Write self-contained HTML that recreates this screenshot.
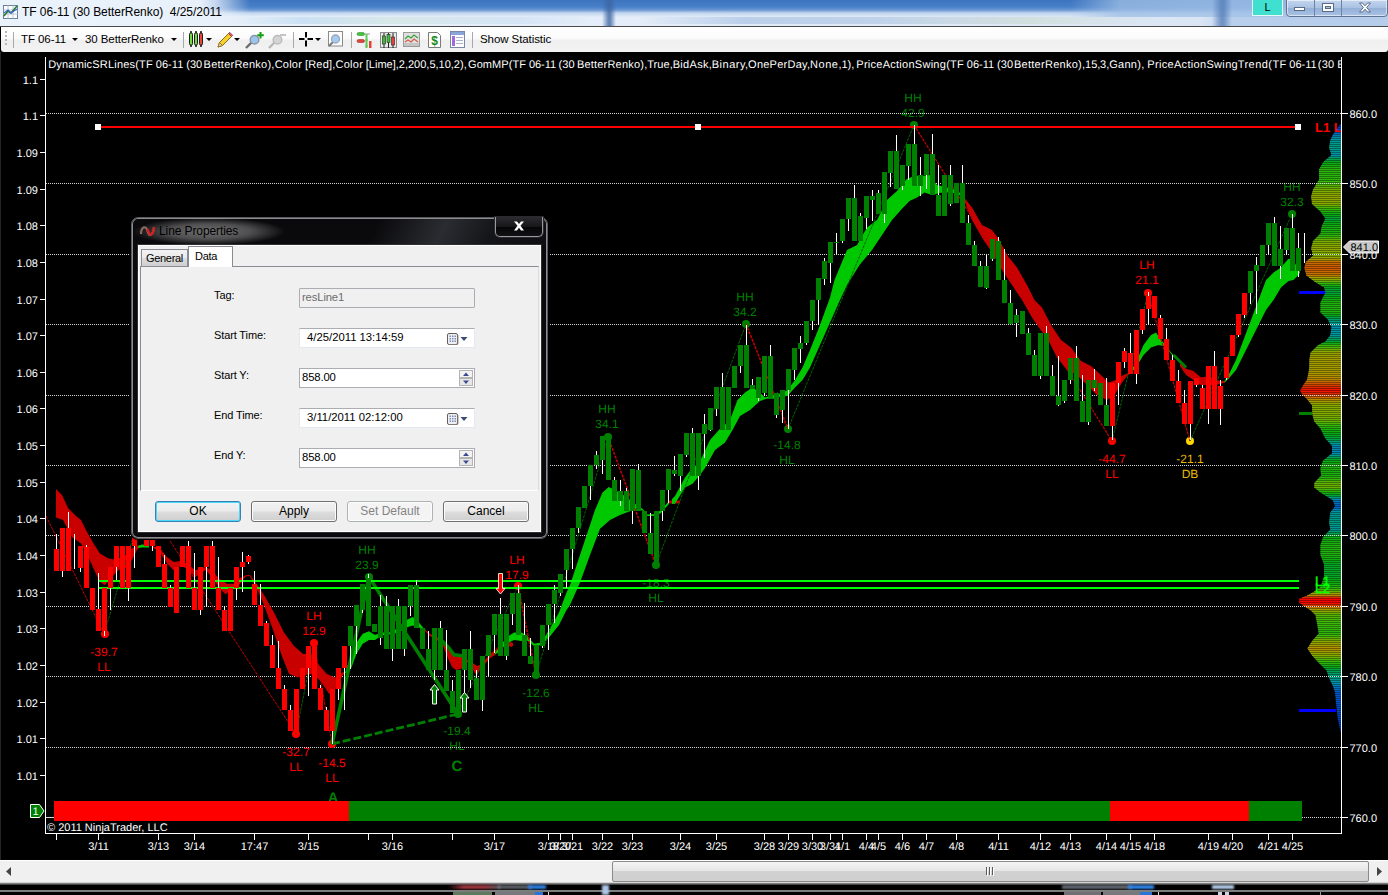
<!DOCTYPE html>
<html lang="en">
<head>
<meta charset="utf-8">
<title>TF 06-11 (30 BetterRenko) 4/25/2011</title>
<style>
html,body{margin:0;padding:0;background:#000;}
body{width:1388px;height:895px;position:relative;overflow:hidden;font-family:"Liberation Sans",Arial,sans-serif;font-size:12px;color:#000;}
.abs{position:absolute;}
#chart{position:absolute;left:0;top:0;}
/* ---------- title bar ---------- */
#title{left:0;top:0;width:1388px;height:26px;background:#dfeaf7;overflow:hidden;}
#title .blur{position:absolute;}
#title .txt{position:absolute;left:22px;top:5px;font-size:12px;line-height:15px;white-space:pre;color:#000;letter-spacing:-0.05px;}
/* ---------- toolbar ---------- */
#tb{left:1px;top:27px;width:1387px;height:25px;background:linear-gradient(#ffffff 0,#fbfbfb 45%,#efefef 55%,#f3f3f3 100%);border-radius:0 0 3px 3px;}
#tbline{left:0;top:26px;width:1388px;height:1px;background:#4a4a4a;}
#tb .t{position:absolute;top:5px;font-size:11.5px;line-height:14px;white-space:pre;letter-spacing:-0.08px;}
#tb .sep{position:absolute;top:5px;width:1px;height:16px;background:#a8a8a8;}
#tb .dd{position:absolute;top:11px;width:0;height:0;border-left:3px solid transparent;border-right:3px solid transparent;border-top:3px solid #000;}
/* ---------- scrollbar ---------- */
#sb{left:0;top:860px;width:1388px;height:23px;background:linear-gradient(#f0f0f0 0,#f0f0f0 21px,#b4b4b4 100%);border-top:1px solid #fff;box-sizing:border-box;}
#thumb{left:612px;top:861px;width:757px;height:21px;box-sizing:border-box;border:1px solid #8a8a8a;border-radius:2px;background:linear-gradient(#f4f4f4 0,#e6e6e6 45%,#d2d2d2 50%,#cfcfcf 100%);}
#bottom{left:0;top:883px;width:1388px;height:12px;background:#000;}
/* ---------- dialog ---------- */
#dlg{left:131px;top:217px;width:417px;height:322px;box-sizing:border-box;border-radius:7px;background:#0a0a0c;border:1px solid #5a5a5e;box-shadow:0 0 0 1px #000, inset 0 0 0 1px #8c8c90;}
#dlg .client{position:absolute;left:6px;top:27px;width:403px;height:287px;background:#f0f0f0;border:1px solid #fff;box-sizing:border-box;outline:1px solid #303033;}
#dlg .lbl{position:absolute;left:75px;font-size:11px;line-height:13px;white-space:pre;letter-spacing:-0.12px;}
#dlg .box{position:absolute;left:160px;width:176px;height:20px;letter-spacing:-0.15px;box-sizing:border-box;border:1px solid #abadb3;background:#fff;font-size:11.3px;line-height:17px;white-space:pre;padding-left:2px;}
#dlg .btn{position:absolute;top:255px;width:86px;height:21px;box-sizing:border-box;border:1px solid #707070;border-radius:3px;background:linear-gradient(#f2f2f2 0,#ebebeb 48%,#dddddd 52%,#cfcfcf 100%);box-shadow:inset 0 0 0 1px #fcfcfc;font-size:12px;line-height:18px;text-align:center;}
</style>
</head>
<body>
<svg id="chart" width="1388" height="895" viewBox="0 0 1388 895" shape-rendering="crispEdges" text-rendering="geometricPrecision">
<defs><clipPath id="plot"><rect x="46" y="54" width="1295" height="779"/></clipPath></defs>
<rect x="0" y="52" width="1388" height="808" fill="#000"/>
<rect x="0" y="52" width="1" height="808" fill="#26222c"/>
<rect x="1340.0" y="124" width="1.0" height="1" fill="rgb(0,30,128)" shape-rendering="geometricPrecision"/>
<rect x="1339.2" y="125" width="1.8" height="1" fill="rgb(0,54,200)" shape-rendering="geometricPrecision"/>
<rect x="1338.5" y="126" width="2.5" height="1" fill="rgb(0,38,128)" shape-rendering="geometricPrecision"/>
<rect x="1337.8" y="127" width="3.2" height="1" fill="rgb(0,67,200)" shape-rendering="geometricPrecision"/>
<rect x="1337.0" y="128" width="4.0" height="1" fill="rgb(0,46,128)" shape-rendering="geometricPrecision"/>
<rect x="1336.3" y="129" width="4.7" height="1" fill="rgb(0,78,200)" shape-rendering="geometricPrecision"/>
<rect x="1335.7" y="130" width="5.3" height="1" fill="rgb(0,53,128)" shape-rendering="geometricPrecision"/>
<rect x="1335.0" y="131" width="6.0" height="1" fill="rgb(0,90,200)" shape-rendering="geometricPrecision"/>
<rect x="1334.3" y="132" width="6.7" height="1" fill="rgb(0,63,124)" shape-rendering="geometricPrecision"/>
<rect x="1333.7" y="133" width="7.3" height="1" fill="rgb(0,110,190)" shape-rendering="geometricPrecision"/>
<rect x="1333.0" y="134" width="8.0" height="1" fill="rgb(0,76,118)" shape-rendering="geometricPrecision"/>
<rect x="1332.5" y="135" width="8.5" height="1" fill="rgb(0,127,181)" shape-rendering="geometricPrecision"/>
<rect x="1332.0" y="136" width="9.0" height="1" fill="rgb(0,85,113)" shape-rendering="geometricPrecision"/>
<rect x="1331.5" y="137" width="9.5" height="1" fill="rgb(0,142,173)" shape-rendering="geometricPrecision"/>
<rect x="1331.0" y="138" width="10.0" height="1" fill="rgb(0,95,108)" shape-rendering="geometricPrecision"/>
<rect x="1330.5" y="139" width="10.5" height="1" fill="rgb(0,151,160)" shape-rendering="geometricPrecision"/>
<rect x="1330.2" y="140" width="10.8" height="1" fill="rgb(0,97,97)" shape-rendering="geometricPrecision"/>
<rect x="1330.0" y="141" width="11.0" height="1" fill="rgb(0,152,149)" shape-rendering="geometricPrecision"/>
<rect x="1329.8" y="142" width="11.2" height="1" fill="rgb(0,97,93)" shape-rendering="geometricPrecision"/>
<rect x="1329.7" y="143" width="11.3" height="1" fill="rgb(0,153,143)" shape-rendering="geometricPrecision"/>
<rect x="1329.5" y="144" width="11.5" height="1" fill="rgb(0,97,88)" shape-rendering="geometricPrecision"/>
<rect x="1329.3" y="145" width="11.7" height="1" fill="rgb(0,154,136)" shape-rendering="geometricPrecision"/>
<rect x="1329.2" y="146" width="11.8" height="1" fill="rgb(0,98,85)" shape-rendering="geometricPrecision"/>
<rect x="1329.0" y="147" width="12.0" height="1" fill="rgb(0,155,130)" shape-rendering="geometricPrecision"/>
<rect x="1329.3" y="148" width="11.7" height="1" fill="rgb(0,98,87)" shape-rendering="geometricPrecision"/>
<rect x="1329.6" y="149" width="11.4" height="1" fill="rgb(0,153,142)" shape-rendering="geometricPrecision"/>
<rect x="1330.0" y="150" width="11.0" height="1" fill="rgb(0,97,95)" shape-rendering="geometricPrecision"/>
<rect x="1330.3" y="151" width="10.7" height="1" fill="rgb(0,151,155)" shape-rendering="geometricPrecision"/>
<rect x="1330.6" y="152" width="10.4" height="1" fill="rgb(0,96,103)" shape-rendering="geometricPrecision"/>
<rect x="1330.9" y="153" width="10.1" height="1" fill="rgb(0,150,168)" shape-rendering="geometricPrecision"/>
<rect x="1331.3" y="154" width="9.7" height="1" fill="rgb(0,92,110)" shape-rendering="geometricPrecision"/>
<rect x="1330.7" y="155" width="10.3" height="1" fill="rgb(0,150,164)" shape-rendering="geometricPrecision"/>
<rect x="1329.6" y="156" width="11.4" height="1" fill="rgb(0,97,90)" shape-rendering="geometricPrecision"/>
<rect x="1328.4" y="157" width="12.6" height="1" fill="rgb(0,156,118)" shape-rendering="geometricPrecision"/>
<rect x="1327.3" y="158" width="13.7" height="1" fill="rgb(0,101,61)" shape-rendering="geometricPrecision"/>
<rect x="1326.2" y="159" width="14.8" height="1" fill="rgb(2,162,75)" shape-rendering="geometricPrecision"/>
<rect x="1325.0" y="160" width="16.0" height="1" fill="rgb(2,104,35)" shape-rendering="geometricPrecision"/>
<rect x="1323.9" y="161" width="17.1" height="1" fill="rgb(7,167,35)" shape-rendering="geometricPrecision"/>
<rect x="1322.9" y="162" width="18.1" height="1" fill="rgb(6,108,12)" shape-rendering="geometricPrecision"/>
<rect x="1322.3" y="163" width="18.7" height="1" fill="rgb(15,171,18)" shape-rendering="geometricPrecision"/>
<rect x="1321.8" y="164" width="19.2" height="1" fill="rgb(12,110,10)" shape-rendering="geometricPrecision"/>
<rect x="1321.2" y="165" width="19.8" height="1" fill="rgb(24,174,17)" shape-rendering="geometricPrecision"/>
<rect x="1320.7" y="166" width="20.3" height="1" fill="rgb(18,112,10)" shape-rendering="geometricPrecision"/>
<rect x="1320.1" y="167" width="20.9" height="1" fill="rgb(34,177,15)" shape-rendering="geometricPrecision"/>
<rect x="1319.6" y="168" width="21.4" height="1" fill="rgb(24,113,8)" shape-rendering="geometricPrecision"/>
<rect x="1319.0" y="169" width="22.0" height="1" fill="rgb(43,180,13)" shape-rendering="geometricPrecision"/>
<rect x="1319.0" y="170" width="22.0" height="1" fill="rgb(27,115,8)" shape-rendering="geometricPrecision"/>
<rect x="1319.0" y="171" width="22.0" height="1" fill="rgb(43,180,13)" shape-rendering="geometricPrecision"/>
<rect x="1319.0" y="172" width="22.0" height="1" fill="rgb(27,115,8)" shape-rendering="geometricPrecision"/>
<rect x="1319.0" y="173" width="22.0" height="1" fill="rgb(43,180,13)" shape-rendering="geometricPrecision"/>
<rect x="1319.0" y="174" width="22.0" height="1" fill="rgb(27,115,8)" shape-rendering="geometricPrecision"/>
<rect x="1319.0" y="175" width="22.0" height="1" fill="rgb(43,180,13)" shape-rendering="geometricPrecision"/>
<rect x="1319.0" y="176" width="22.0" height="1" fill="rgb(27,115,8)" shape-rendering="geometricPrecision"/>
<rect x="1319.0" y="177" width="22.0" height="1" fill="rgb(43,180,13)" shape-rendering="geometricPrecision"/>
<rect x="1319.0" y="178" width="22.0" height="1" fill="rgb(27,115,8)" shape-rendering="geometricPrecision"/>
<rect x="1319.0" y="179" width="22.0" height="1" fill="rgb(43,180,13)" shape-rendering="geometricPrecision"/>
<rect x="1318.4" y="180" width="22.6" height="1" fill="rgb(30,115,7)" shape-rendering="geometricPrecision"/>
<rect x="1317.8" y="181" width="23.2" height="1" fill="rgb(53,183,11)" shape-rendering="geometricPrecision"/>
<rect x="1317.2" y="182" width="23.8" height="1" fill="rgb(37,117,6)" shape-rendering="geometricPrecision"/>
<rect x="1316.6" y="183" width="24.4" height="1" fill="rgb(65,183,9)" shape-rendering="geometricPrecision"/>
<rect x="1316.0" y="184" width="25.0" height="1" fill="rgb(48,116,5)" shape-rendering="geometricPrecision"/>
<rect x="1315.4" y="185" width="25.6" height="1" fill="rgb(84,180,6)" shape-rendering="geometricPrecision"/>
<rect x="1314.8" y="186" width="26.2" height="1" fill="rgb(58,114,3)" shape-rendering="geometricPrecision"/>
<rect x="1314.2" y="187" width="26.8" height="1" fill="rgb(102,177,4)" shape-rendering="geometricPrecision"/>
<rect x="1313.6" y="188" width="27.4" height="1" fill="rgb(70,112,1)" shape-rendering="geometricPrecision"/>
<rect x="1313.0" y="189" width="28.0" height="1" fill="rgb(120,174,2)" shape-rendering="geometricPrecision"/>
<rect x="1312.7" y="190" width="28.3" height="1" fill="rgb(79,110,0)" shape-rendering="geometricPrecision"/>
<rect x="1312.4" y="191" width="28.6" height="1" fill="rgb(128,173,0)" shape-rendering="geometricPrecision"/>
<rect x="1312.1" y="192" width="28.9" height="1" fill="rgb(84,110,0)" shape-rendering="geometricPrecision"/>
<rect x="1311.9" y="193" width="29.1" height="1" fill="rgb(136,171,0)" shape-rendering="geometricPrecision"/>
<rect x="1311.6" y="194" width="29.4" height="1" fill="rgb(88,108,0)" shape-rendering="geometricPrecision"/>
<rect x="1311.3" y="195" width="29.7" height="1" fill="rgb(142,168,0)" shape-rendering="geometricPrecision"/>
<rect x="1311.0" y="196" width="30.0" height="1" fill="rgb(92,106,0)" shape-rendering="geometricPrecision"/>
<rect x="1311.1" y="197" width="29.9" height="1" fill="rgb(143,167,0)" shape-rendering="geometricPrecision"/>
<rect x="1311.3" y="198" width="29.7" height="1" fill="rgb(90,106,0)" shape-rendering="geometricPrecision"/>
<rect x="1311.4" y="199" width="29.6" height="1" fill="rgb(141,168,0)" shape-rendering="geometricPrecision"/>
<rect x="1311.5" y="200" width="29.5" height="1" fill="rgb(88,108,0)" shape-rendering="geometricPrecision"/>
<rect x="1311.7" y="201" width="29.3" height="1" fill="rgb(138,170,0)" shape-rendering="geometricPrecision"/>
<rect x="1311.8" y="202" width="29.2" height="1" fill="rgb(87,108,0)" shape-rendering="geometricPrecision"/>
<rect x="1311.9" y="203" width="29.1" height="1" fill="rgb(135,171,0)" shape-rendering="geometricPrecision"/>
<rect x="1312.4" y="204" width="28.6" height="1" fill="rgb(81,110,0)" shape-rendering="geometricPrecision"/>
<rect x="1313.6" y="205" width="27.4" height="1" fill="rgb(111,176,3)" shape-rendering="geometricPrecision"/>
<rect x="1314.7" y="206" width="26.3" height="1" fill="rgb(60,113,3)" shape-rendering="geometricPrecision"/>
<rect x="1315.8" y="207" width="25.2" height="1" fill="rgb(77,181,7)" shape-rendering="geometricPrecision"/>
<rect x="1316.9" y="208" width="24.1" height="1" fill="rgb(38,117,5)" shape-rendering="geometricPrecision"/>
<rect x="1318.1" y="209" width="22.9" height="1" fill="rgb(51,182,11)" shape-rendering="geometricPrecision"/>
<rect x="1319.2" y="210" width="21.8" height="1" fill="rgb(26,114,8)" shape-rendering="geometricPrecision"/>
<rect x="1320.3" y="211" width="20.7" height="1" fill="rgb(32,176,15)" shape-rendering="geometricPrecision"/>
<rect x="1321.0" y="212" width="20.0" height="1" fill="rgb(16,111,10)" shape-rendering="geometricPrecision"/>
<rect x="1321.7" y="213" width="19.3" height="1" fill="rgb(20,173,17)" shape-rendering="geometricPrecision"/>
<rect x="1322.4" y="214" width="18.6" height="1" fill="rgb(8,109,12)" shape-rendering="geometricPrecision"/>
<rect x="1323.2" y="215" width="17.8" height="1" fill="rgb(9,169,22)" shape-rendering="geometricPrecision"/>
<rect x="1323.9" y="216" width="17.1" height="1" fill="rgb(4,106,22)" shape-rendering="geometricPrecision"/>
<rect x="1324.6" y="217" width="16.4" height="1" fill="rgb(6,166,47)" shape-rendering="geometricPrecision"/>
<rect x="1325.3" y="218" width="15.7" height="1" fill="rgb(2,104,38)" shape-rendering="geometricPrecision"/>
<rect x="1324.8" y="219" width="16.2" height="1" fill="rgb(5,165,51)" shape-rendering="geometricPrecision"/>
<rect x="1324.4" y="220" width="16.6" height="1" fill="rgb(3,106,27)" shape-rendering="geometricPrecision"/>
<rect x="1323.9" y="221" width="17.1" height="1" fill="rgb(7,167,35)" shape-rendering="geometricPrecision"/>
<rect x="1323.4" y="222" width="17.6" height="1" fill="rgb(5,107,17)" shape-rendering="geometricPrecision"/>
<rect x="1322.9" y="223" width="18.1" height="1" fill="rgb(10,170,19)" shape-rendering="geometricPrecision"/>
<rect x="1322.5" y="224" width="18.5" height="1" fill="rgb(8,109,12)" shape-rendering="geometricPrecision"/>
<rect x="1322.0" y="225" width="19.0" height="1" fill="rgb(18,172,18)" shape-rendering="geometricPrecision"/>
<rect x="1321.6" y="226" width="19.4" height="1" fill="rgb(13,110,10)" shape-rendering="geometricPrecision"/>
<rect x="1321.4" y="227" width="19.6" height="1" fill="rgb(23,174,17)" shape-rendering="geometricPrecision"/>
<rect x="1321.2" y="228" width="19.8" height="1" fill="rgb(15,111,10)" shape-rendering="geometricPrecision"/>
<rect x="1321.0" y="229" width="20.0" height="1" fill="rgb(26,174,16)" shape-rendering="geometricPrecision"/>
<rect x="1320.8" y="230" width="20.2" height="1" fill="rgb(17,112,10)" shape-rendering="geometricPrecision"/>
<rect x="1320.7" y="231" width="20.3" height="1" fill="rgb(29,175,16)" shape-rendering="geometricPrecision"/>
<rect x="1320.5" y="232" width="20.5" height="1" fill="rgb(19,112,9)" shape-rendering="geometricPrecision"/>
<rect x="1320.3" y="233" width="20.7" height="1" fill="rgb(32,176,15)" shape-rendering="geometricPrecision"/>
<rect x="1319.3" y="234" width="21.7" height="1" fill="rgb(25,114,8)" shape-rendering="geometricPrecision"/>
<rect x="1318.4" y="235" width="22.6" height="1" fill="rgb(48,181,12)" shape-rendering="geometricPrecision"/>
<rect x="1317.4" y="236" width="23.6" height="1" fill="rgb(35,117,6)" shape-rendering="geometricPrecision"/>
<rect x="1316.4" y="237" width="24.6" height="1" fill="rgb(68,183,8)" shape-rendering="geometricPrecision"/>
<rect x="1315.4" y="238" width="25.6" height="1" fill="rgb(53,115,3)" shape-rendering="geometricPrecision"/>
<rect x="1314.5" y="239" width="26.5" height="1" fill="rgb(98,178,4)" shape-rendering="geometricPrecision"/>
<rect x="1313.5" y="240" width="27.5" height="1" fill="rgb(71,112,1)" shape-rendering="geometricPrecision"/>
<rect x="1312.9" y="241" width="28.1" height="1" fill="rgb(122,174,1)" shape-rendering="geometricPrecision"/>
<rect x="1312.6" y="242" width="28.4" height="1" fill="rgb(80,110,0)" shape-rendering="geometricPrecision"/>
<rect x="1312.3" y="243" width="28.7" height="1" fill="rgb(130,172,0)" shape-rendering="geometricPrecision"/>
<rect x="1312.1" y="244" width="28.9" height="1" fill="rgb(85,110,0)" shape-rendering="geometricPrecision"/>
<rect x="1311.8" y="245" width="29.2" height="1" fill="rgb(137,170,0)" shape-rendering="geometricPrecision"/>
<rect x="1311.5" y="246" width="29.5" height="1" fill="rgb(88,108,0)" shape-rendering="geometricPrecision"/>
<rect x="1311.3" y="247" width="29.7" height="1" fill="rgb(142,167,0)" shape-rendering="geometricPrecision"/>
<rect x="1311.0" y="248" width="30.0" height="1" fill="rgb(92,106,0)" shape-rendering="geometricPrecision"/>
<rect x="1311.3" y="249" width="29.7" height="1" fill="rgb(142,168,0)" shape-rendering="geometricPrecision"/>
<rect x="1311.6" y="250" width="29.4" height="1" fill="rgb(88,108,0)" shape-rendering="geometricPrecision"/>
<rect x="1311.9" y="251" width="29.1" height="1" fill="rgb(136,171,0)" shape-rendering="geometricPrecision"/>
<rect x="1312.1" y="252" width="28.9" height="1" fill="rgb(84,110,0)" shape-rendering="geometricPrecision"/>
<rect x="1312.4" y="253" width="28.6" height="1" fill="rgb(128,173,0)" shape-rendering="geometricPrecision"/>
<rect x="1312.7" y="254" width="28.3" height="1" fill="rgb(79,110,0)" shape-rendering="geometricPrecision"/>
<rect x="1313.0" y="255" width="28.0" height="1" fill="rgb(120,174,2)" shape-rendering="geometricPrecision"/>
<rect x="1311.9" y="256" width="29.1" height="1" fill="rgb(87,109,0)" shape-rendering="geometricPrecision"/>
<rect x="1310.7" y="257" width="30.3" height="1" fill="rgb(148,164,0)" shape-rendering="geometricPrecision"/>
<rect x="1309.6" y="258" width="31.4" height="1" fill="rgb(101,101,0)" shape-rendering="geometricPrecision"/>
<rect x="1308.4" y="259" width="32.6" height="1" fill="rgb(171,152,0)" shape-rendering="geometricPrecision"/>
<rect x="1307.3" y="260" width="33.7" height="1" fill="rgb(116,88,0)" shape-rendering="geometricPrecision"/>
<rect x="1306.2" y="261" width="34.8" height="1" fill="rgb(191,119,0)" shape-rendering="geometricPrecision"/>
<rect x="1305.5" y="262" width="35.5" height="1" fill="rgb(126,69,0)" shape-rendering="geometricPrecision"/>
<rect x="1305.3" y="263" width="35.7" height="1" fill="rgb(199,104,0)" shape-rendering="geometricPrecision"/>
<rect x="1305.1" y="264" width="35.9" height="1" fill="rgb(128,64,0)" shape-rendering="geometricPrecision"/>
<rect x="1304.9" y="265" width="36.1" height="1" fill="rgb(202,97,0)" shape-rendering="geometricPrecision"/>
<rect x="1304.6" y="266" width="36.4" height="1" fill="rgb(130,59,0)" shape-rendering="geometricPrecision"/>
<rect x="1304.4" y="267" width="36.6" height="1" fill="rgb(205,89,0)" shape-rendering="geometricPrecision"/>
<rect x="1304.4" y="268" width="36.6" height="1" fill="rgb(131,56,0)" shape-rendering="geometricPrecision"/>
<rect x="1304.7" y="269" width="36.3" height="1" fill="rgb(203,94,0)" shape-rendering="geometricPrecision"/>
<rect x="1304.9" y="270" width="36.1" height="1" fill="rgb(129,63,0)" shape-rendering="geometricPrecision"/>
<rect x="1305.2" y="271" width="35.8" height="1" fill="rgb(200,103,0)" shape-rendering="geometricPrecision"/>
<rect x="1305.5" y="272" width="35.5" height="1" fill="rgb(126,69,0)" shape-rendering="geometricPrecision"/>
<rect x="1305.8" y="273" width="35.2" height="1" fill="rgb(195,112,0)" shape-rendering="geometricPrecision"/>
<rect x="1306.0" y="274" width="35.0" height="1" fill="rgb(123,74,0)" shape-rendering="geometricPrecision"/>
<rect x="1306.3" y="275" width="34.7" height="1" fill="rgb(190,121,0)" shape-rendering="geometricPrecision"/>
<rect x="1307.6" y="276" width="33.4" height="1" fill="rgb(114,91,0)" shape-rendering="geometricPrecision"/>
<rect x="1308.9" y="277" width="32.1" height="1" fill="rgb(166,155,0)" shape-rendering="geometricPrecision"/>
<rect x="1310.2" y="278" width="30.8" height="1" fill="rgb(97,103,0)" shape-rendering="geometricPrecision"/>
<rect x="1311.6" y="279" width="29.4" height="1" fill="rgb(139,169,0)" shape-rendering="geometricPrecision"/>
<rect x="1312.9" y="280" width="28.1" height="1" fill="rgb(77,111,0)" shape-rendering="geometricPrecision"/>
<rect x="1314.2" y="281" width="26.8" height="1" fill="rgb(102,177,4)" shape-rendering="geometricPrecision"/>
<rect x="1315.8" y="282" width="25.2" height="1" fill="rgb(49,115,4)" shape-rendering="geometricPrecision"/>
<rect x="1317.5" y="283" width="23.5" height="1" fill="rgb(56,183,10)" shape-rendering="geometricPrecision"/>
<rect x="1319.1" y="284" width="21.9" height="1" fill="rgb(26,114,8)" shape-rendering="geometricPrecision"/>
<rect x="1320.7" y="285" width="20.3" height="1" fill="rgb(28,175,16)" shape-rendering="geometricPrecision"/>
<rect x="1322.4" y="286" width="18.6" height="1" fill="rgb(9,109,11)" shape-rendering="geometricPrecision"/>
<rect x="1324.0" y="287" width="17.0" height="1" fill="rgb(7,167,37)" shape-rendering="geometricPrecision"/>
<rect x="1324.3" y="288" width="16.7" height="1" fill="rgb(3,106,26)" shape-rendering="geometricPrecision"/>
<rect x="1324.5" y="289" width="16.5" height="1" fill="rgb(6,166,46)" shape-rendering="geometricPrecision"/>
<rect x="1324.8" y="290" width="16.2" height="1" fill="rgb(3,105,32)" shape-rendering="geometricPrecision"/>
<rect x="1325.0" y="291" width="16.0" height="1" fill="rgb(4,164,55)" shape-rendering="geometricPrecision"/>
<rect x="1325.3" y="292" width="15.7" height="1" fill="rgb(2,104,38)" shape-rendering="geometricPrecision"/>
<rect x="1324.8" y="293" width="16.2" height="1" fill="rgb(5,165,51)" shape-rendering="geometricPrecision"/>
<rect x="1324.3" y="294" width="16.7" height="1" fill="rgb(3,106,26)" shape-rendering="geometricPrecision"/>
<rect x="1323.8" y="295" width="17.2" height="1" fill="rgb(7,168,34)" shape-rendering="geometricPrecision"/>
<rect x="1323.3" y="296" width="17.7" height="1" fill="rgb(5,108,16)" shape-rendering="geometricPrecision"/>
<rect x="1322.8" y="297" width="18.2" height="1" fill="rgb(11,170,19)" shape-rendering="geometricPrecision"/>
<rect x="1322.3" y="298" width="18.7" height="1" fill="rgb(9,109,11)" shape-rendering="geometricPrecision"/>
<rect x="1321.8" y="299" width="19.2" height="1" fill="rgb(19,173,18)" shape-rendering="geometricPrecision"/>
<rect x="1321.3" y="300" width="19.7" height="1" fill="rgb(15,111,10)" shape-rendering="geometricPrecision"/>
<rect x="1320.8" y="301" width="20.2" height="1" fill="rgb(28,175,16)" shape-rendering="geometricPrecision"/>
<rect x="1320.3" y="302" width="20.7" height="1" fill="rgb(20,112,9)" shape-rendering="geometricPrecision"/>
<rect x="1320.3" y="303" width="20.7" height="1" fill="rgb(32,176,15)" shape-rendering="geometricPrecision"/>
<rect x="1320.3" y="304" width="20.7" height="1" fill="rgb(20,112,9)" shape-rendering="geometricPrecision"/>
<rect x="1320.3" y="305" width="20.7" height="1" fill="rgb(32,176,15)" shape-rendering="geometricPrecision"/>
<rect x="1320.3" y="306" width="20.7" height="1" fill="rgb(20,112,9)" shape-rendering="geometricPrecision"/>
<rect x="1320.3" y="307" width="20.7" height="1" fill="rgb(32,176,15)" shape-rendering="geometricPrecision"/>
<rect x="1320.3" y="308" width="20.7" height="1" fill="rgb(20,112,9)" shape-rendering="geometricPrecision"/>
<rect x="1320.3" y="309" width="20.7" height="1" fill="rgb(32,176,15)" shape-rendering="geometricPrecision"/>
<rect x="1320.3" y="310" width="20.7" height="1" fill="rgb(20,112,9)" shape-rendering="geometricPrecision"/>
<rect x="1320.3" y="311" width="20.7" height="1" fill="rgb(32,176,15)" shape-rendering="geometricPrecision"/>
<rect x="1320.3" y="312" width="20.7" height="1" fill="rgb(20,112,9)" shape-rendering="geometricPrecision"/>
<rect x="1321.4" y="313" width="19.6" height="1" fill="rgb(23,174,17)" shape-rendering="geometricPrecision"/>
<rect x="1322.4" y="314" width="18.6" height="1" fill="rgb(8,109,12)" shape-rendering="geometricPrecision"/>
<rect x="1323.5" y="315" width="17.5" height="1" fill="rgb(8,168,28)" shape-rendering="geometricPrecision"/>
<rect x="1324.5" y="316" width="16.5" height="1" fill="rgb(3,106,29)" shape-rendering="geometricPrecision"/>
<rect x="1325.6" y="317" width="15.4" height="1" fill="rgb(3,163,65)" shape-rendering="geometricPrecision"/>
<rect x="1326.6" y="318" width="14.4" height="1" fill="rgb(0,102,53)" shape-rendering="geometricPrecision"/>
<rect x="1327.7" y="319" width="13.3" height="1" fill="rgb(0,158,103)" shape-rendering="geometricPrecision"/>
<rect x="1328.2" y="320" width="12.8" height="1" fill="rgb(0,100,72)" shape-rendering="geometricPrecision"/>
<rect x="1328.7" y="321" width="12.3" height="1" fill="rgb(0,155,123)" shape-rendering="geometricPrecision"/>
<rect x="1329.2" y="322" width="11.8" height="1" fill="rgb(0,98,85)" shape-rendering="geometricPrecision"/>
<rect x="1329.6" y="323" width="11.4" height="1" fill="rgb(0,153,142)" shape-rendering="geometricPrecision"/>
<rect x="1330.1" y="324" width="10.9" height="1" fill="rgb(0,97,97)" shape-rendering="geometricPrecision"/>
<rect x="1330.6" y="325" width="10.4" height="1" fill="rgb(0,150,162)" shape-rendering="geometricPrecision"/>
<rect x="1331.1" y="326" width="9.9" height="1" fill="rgb(0,94,108)" shape-rendering="geometricPrecision"/>
<rect x="1331.3" y="327" width="9.7" height="1" fill="rgb(0,144,172)" shape-rendering="geometricPrecision"/>
<rect x="1331.2" y="328" width="9.8" height="1" fill="rgb(0,94,109)" shape-rendering="geometricPrecision"/>
<rect x="1331.0" y="329" width="10.0" height="1" fill="rgb(0,149,170)" shape-rendering="geometricPrecision"/>
<rect x="1330.9" y="330" width="10.1" height="1" fill="rgb(0,96,107)" shape-rendering="geometricPrecision"/>
<rect x="1330.8" y="331" width="10.2" height="1" fill="rgb(0,150,165)" shape-rendering="geometricPrecision"/>
<rect x="1330.6" y="332" width="10.4" height="1" fill="rgb(0,96,103)" shape-rendering="geometricPrecision"/>
<rect x="1330.5" y="333" width="10.5" height="1" fill="rgb(0,151,159)" shape-rendering="geometricPrecision"/>
<rect x="1330.3" y="334" width="10.7" height="1" fill="rgb(0,96,99)" shape-rendering="geometricPrecision"/>
<rect x="1330.0" y="335" width="11.0" height="1" fill="rgb(0,152,150)" shape-rendering="geometricPrecision"/>
<rect x="1329.3" y="336" width="11.7" height="1" fill="rgb(0,98,86)" shape-rendering="geometricPrecision"/>
<rect x="1328.5" y="337" width="12.5" height="1" fill="rgb(0,156,119)" shape-rendering="geometricPrecision"/>
<rect x="1327.7" y="338" width="13.3" height="1" fill="rgb(0,101,65)" shape-rendering="geometricPrecision"/>
<rect x="1326.9" y="339" width="14.1" height="1" fill="rgb(0,160,87)" shape-rendering="geometricPrecision"/>
<rect x="1326.1" y="340" width="14.9" height="1" fill="rgb(1,103,47)" shape-rendering="geometricPrecision"/>
<rect x="1325.3" y="341" width="15.7" height="1" fill="rgb(4,164,60)" shape-rendering="geometricPrecision"/>
<rect x="1323.3" y="342" width="17.7" height="1" fill="rgb(5,108,15)" shape-rendering="geometricPrecision"/>
<rect x="1321.2" y="343" width="19.8" height="1" fill="rgb(24,174,17)" shape-rendering="geometricPrecision"/>
<rect x="1319.2" y="344" width="21.8" height="1" fill="rgb(26,114,8)" shape-rendering="geometricPrecision"/>
<rect x="1317.6" y="345" width="23.4" height="1" fill="rgb(55,183,10)" shape-rendering="geometricPrecision"/>
<rect x="1316.6" y="346" width="24.4" height="1" fill="rgb(42,117,5)" shape-rendering="geometricPrecision"/>
<rect x="1315.6" y="347" width="25.4" height="1" fill="rgb(81,181,7)" shape-rendering="geometricPrecision"/>
<rect x="1314.6" y="348" width="26.4" height="1" fill="rgb(61,113,3)" shape-rendering="geometricPrecision"/>
<rect x="1313.5" y="349" width="27.5" height="1" fill="rgb(111,176,3)" shape-rendering="geometricPrecision"/>
<rect x="1312.5" y="350" width="28.5" height="1" fill="rgb(81,110,0)" shape-rendering="geometricPrecision"/>
<rect x="1311.5" y="351" width="29.5" height="1" fill="rgb(139,169,0)" shape-rendering="geometricPrecision"/>
<rect x="1310.5" y="352" width="30.5" height="1" fill="rgb(96,104,0)" shape-rendering="geometricPrecision"/>
<rect x="1310.3" y="353" width="30.7" height="1" fill="rgb(152,162,0)" shape-rendering="geometricPrecision"/>
<rect x="1310.2" y="354" width="30.8" height="1" fill="rgb(97,103,0)" shape-rendering="geometricPrecision"/>
<rect x="1310.0" y="355" width="31.0" height="1" fill="rgb(155,160,0)" shape-rendering="geometricPrecision"/>
<rect x="1309.8" y="356" width="31.2" height="1" fill="rgb(100,101,0)" shape-rendering="geometricPrecision"/>
<rect x="1309.6" y="357" width="31.4" height="1" fill="rgb(159,159,0)" shape-rendering="geometricPrecision"/>
<rect x="1309.5" y="358" width="31.5" height="1" fill="rgb(102,101,0)" shape-rendering="geometricPrecision"/>
<rect x="1309.3" y="359" width="31.7" height="1" fill="rgb(162,157,0)" shape-rendering="geometricPrecision"/>
<rect x="1309.3" y="360" width="31.7" height="1" fill="rgb(103,99,0)" shape-rendering="geometricPrecision"/>
<rect x="1309.2" y="361" width="31.8" height="1" fill="rgb(163,156,0)" shape-rendering="geometricPrecision"/>
<rect x="1309.2" y="362" width="31.8" height="1" fill="rgb(104,99,0)" shape-rendering="geometricPrecision"/>
<rect x="1309.2" y="363" width="31.8" height="1" fill="rgb(163,156,0)" shape-rendering="geometricPrecision"/>
<rect x="1309.2" y="364" width="31.9" height="1" fill="rgb(104,99,0)" shape-rendering="geometricPrecision"/>
<rect x="1309.1" y="365" width="31.9" height="1" fill="rgb(164,156,0)" shape-rendering="geometricPrecision"/>
<rect x="1309.1" y="366" width="31.9" height="1" fill="rgb(104,99,0)" shape-rendering="geometricPrecision"/>
<rect x="1309.1" y="367" width="31.9" height="1" fill="rgb(165,155,0)" shape-rendering="geometricPrecision"/>
<rect x="1309.0" y="368" width="32.0" height="1" fill="rgb(105,99,0)" shape-rendering="geometricPrecision"/>
<rect x="1309.0" y="369" width="32.0" height="1" fill="rgb(165,155,0)" shape-rendering="geometricPrecision"/>
<rect x="1308.8" y="370" width="32.2" height="1" fill="rgb(106,98,0)" shape-rendering="geometricPrecision"/>
<rect x="1308.6" y="371" width="32.4" height="1" fill="rgb(169,153,0)" shape-rendering="geometricPrecision"/>
<rect x="1308.4" y="372" width="32.6" height="1" fill="rgb(109,97,0)" shape-rendering="geometricPrecision"/>
<rect x="1308.2" y="373" width="32.8" height="1" fill="rgb(173,151,0)" shape-rendering="geometricPrecision"/>
<rect x="1308.0" y="374" width="33.0" height="1" fill="rgb(112,96,0)" shape-rendering="geometricPrecision"/>
<rect x="1307.8" y="375" width="33.2" height="1" fill="rgb(177,146,0)" shape-rendering="geometricPrecision"/>
<rect x="1307.6" y="376" width="33.4" height="1" fill="rgb(114,91,0)" shape-rendering="geometricPrecision"/>
<rect x="1307.4" y="377" width="33.6" height="1" fill="rgb(181,139,0)" shape-rendering="geometricPrecision"/>
<rect x="1307.2" y="378" width="33.8" height="1" fill="rgb(116,87,0)" shape-rendering="geometricPrecision"/>
<rect x="1307.0" y="379" width="34.0" height="1" fill="rgb(184,133,0)" shape-rendering="geometricPrecision"/>
<rect x="1306.3" y="380" width="34.7" height="1" fill="rgb(121,78,0)" shape-rendering="geometricPrecision"/>
<rect x="1305.6" y="381" width="35.4" height="1" fill="rgb(196,110,0)" shape-rendering="geometricPrecision"/>
<rect x="1305.0" y="382" width="36.0" height="1" fill="rgb(129,63,0)" shape-rendering="geometricPrecision"/>
<rect x="1304.3" y="383" width="36.7" height="1" fill="rgb(206,87,0)" shape-rendering="geometricPrecision"/>
<rect x="1303.6" y="384" width="37.4" height="1" fill="rgb(134,47,0)" shape-rendering="geometricPrecision"/>
<rect x="1302.9" y="385" width="38.1" height="1" fill="rgb(214,62,0)" shape-rendering="geometricPrecision"/>
<rect x="1302.3" y="386" width="38.7" height="1" fill="rgb(139,31,0)" shape-rendering="geometricPrecision"/>
<rect x="1301.7" y="387" width="39.3" height="1" fill="rgb(223,39,0)" shape-rendering="geometricPrecision"/>
<rect x="1301.1" y="388" width="39.9" height="1" fill="rgb(147,19,0)" shape-rendering="geometricPrecision"/>
<rect x="1300.6" y="389" width="40.4" height="1" fill="rgb(236,23,0)" shape-rendering="geometricPrecision"/>
<rect x="1300.0" y="390" width="41.0" height="1" fill="rgb(155,9,0)" shape-rendering="geometricPrecision"/>
<rect x="1300.5" y="391" width="40.5" height="1" fill="rgb(237,22,0)" shape-rendering="geometricPrecision"/>
<rect x="1301.1" y="392" width="39.9" height="1" fill="rgb(147,19,0)" shape-rendering="geometricPrecision"/>
<rect x="1301.6" y="393" width="39.4" height="1" fill="rgb(224,38,0)" shape-rendering="geometricPrecision"/>
<rect x="1302.2" y="394" width="38.8" height="1" fill="rgb(139,30,0)" shape-rendering="geometricPrecision"/>
<rect x="1303.2" y="395" width="37.8" height="1" fill="rgb(212,67,0)" shape-rendering="geometricPrecision"/>
<rect x="1304.2" y="396" width="36.8" height="1" fill="rgb(131,55,0)" shape-rendering="geometricPrecision"/>
<rect x="1305.3" y="397" width="35.7" height="1" fill="rgb(199,104,0)" shape-rendering="geometricPrecision"/>
<rect x="1306.3" y="398" width="34.7" height="1" fill="rgb(121,77,0)" shape-rendering="geometricPrecision"/>
<rect x="1307.2" y="399" width="33.8" height="1" fill="rgb(182,137,0)" shape-rendering="geometricPrecision"/>
<rect x="1308.0" y="400" width="33.0" height="1" fill="rgb(112,96,0)" shape-rendering="geometricPrecision"/>
<rect x="1308.8" y="401" width="32.2" height="1" fill="rgb(167,154,0)" shape-rendering="geometricPrecision"/>
<rect x="1309.6" y="402" width="31.4" height="1" fill="rgb(101,101,0)" shape-rendering="geometricPrecision"/>
<rect x="1310.4" y="403" width="30.6" height="1" fill="rgb(151,163,0)" shape-rendering="geometricPrecision"/>
<rect x="1311.2" y="404" width="29.8" height="1" fill="rgb(91,106,0)" shape-rendering="geometricPrecision"/>
<rect x="1312.0" y="405" width="29.0" height="1" fill="rgb(135,172,0)" shape-rendering="geometricPrecision"/>
<rect x="1312.0" y="406" width="29.0" height="1" fill="rgb(85,110,0)" shape-rendering="geometricPrecision"/>
<rect x="1312.0" y="407" width="29.0" height="1" fill="rgb(134,172,0)" shape-rendering="geometricPrecision"/>
<rect x="1312.1" y="408" width="28.9" height="1" fill="rgb(85,110,0)" shape-rendering="geometricPrecision"/>
<rect x="1312.1" y="409" width="28.9" height="1" fill="rgb(133,172,0)" shape-rendering="geometricPrecision"/>
<rect x="1312.1" y="410" width="28.9" height="1" fill="rgb(85,110,0)" shape-rendering="geometricPrecision"/>
<rect x="1312.1" y="411" width="28.9" height="1" fill="rgb(132,172,0)" shape-rendering="geometricPrecision"/>
<rect x="1312.2" y="412" width="28.8" height="1" fill="rgb(84,110,0)" shape-rendering="geometricPrecision"/>
<rect x="1312.2" y="413" width="28.8" height="1" fill="rgb(132,172,0)" shape-rendering="geometricPrecision"/>
<rect x="1312.3" y="414" width="28.7" height="1" fill="rgb(83,110,0)" shape-rendering="geometricPrecision"/>
<rect x="1312.6" y="415" width="28.4" height="1" fill="rgb(126,173,1)" shape-rendering="geometricPrecision"/>
<rect x="1312.9" y="416" width="28.1" height="1" fill="rgb(78,111,0)" shape-rendering="geometricPrecision"/>
<rect x="1313.1" y="417" width="27.9" height="1" fill="rgb(118,174,2)" shape-rendering="geometricPrecision"/>
<rect x="1313.4" y="418" width="27.6" height="1" fill="rgb(72,112,1)" shape-rendering="geometricPrecision"/>
<rect x="1313.7" y="419" width="27.3" height="1" fill="rgb(110,176,3)" shape-rendering="geometricPrecision"/>
<rect x="1313.9" y="420" width="27.1" height="1" fill="rgb(67,113,1)" shape-rendering="geometricPrecision"/>
<rect x="1314.2" y="421" width="26.8" height="1" fill="rgb(102,177,4)" shape-rendering="geometricPrecision"/>
<rect x="1315.1" y="422" width="25.9" height="1" fill="rgb(56,114,3)" shape-rendering="geometricPrecision"/>
<rect x="1315.9" y="423" width="25.1" height="1" fill="rgb(75,182,7)" shape-rendering="geometricPrecision"/>
<rect x="1316.8" y="424" width="24.2" height="1" fill="rgb(39,117,5)" shape-rendering="geometricPrecision"/>
<rect x="1317.7" y="425" width="23.3" height="1" fill="rgb(54,183,11)" shape-rendering="geometricPrecision"/>
<rect x="1318.6" y="426" width="22.4" height="1" fill="rgb(30,115,7)" shape-rendering="geometricPrecision"/>
<rect x="1319.4" y="427" width="21.6" height="1" fill="rgb(39,178,14)" shape-rendering="geometricPrecision"/>
<rect x="1320.3" y="428" width="20.7" height="1" fill="rgb(20,112,9)" shape-rendering="geometricPrecision"/>
<rect x="1320.8" y="429" width="20.2" height="1" fill="rgb(28,175,16)" shape-rendering="geometricPrecision"/>
<rect x="1321.3" y="430" width="19.7" height="1" fill="rgb(15,111,10)" shape-rendering="geometricPrecision"/>
<rect x="1321.8" y="431" width="19.2" height="1" fill="rgb(19,173,18)" shape-rendering="geometricPrecision"/>
<rect x="1322.3" y="432" width="18.7" height="1" fill="rgb(9,109,11)" shape-rendering="geometricPrecision"/>
<rect x="1322.8" y="433" width="18.2" height="1" fill="rgb(11,170,19)" shape-rendering="geometricPrecision"/>
<rect x="1323.3" y="434" width="17.7" height="1" fill="rgb(5,108,16)" shape-rendering="geometricPrecision"/>
<rect x="1323.8" y="435" width="17.2" height="1" fill="rgb(7,168,34)" shape-rendering="geometricPrecision"/>
<rect x="1324.3" y="436" width="16.7" height="1" fill="rgb(3,106,26)" shape-rendering="geometricPrecision"/>
<rect x="1324.8" y="437" width="16.2" height="1" fill="rgb(5,165,51)" shape-rendering="geometricPrecision"/>
<rect x="1325.3" y="438" width="15.7" height="1" fill="rgb(2,104,38)" shape-rendering="geometricPrecision"/>
<rect x="1326.2" y="439" width="14.8" height="1" fill="rgb(2,162,75)" shape-rendering="geometricPrecision"/>
<rect x="1327.1" y="440" width="13.9" height="1" fill="rgb(0,101,58)" shape-rendering="geometricPrecision"/>
<rect x="1328.0" y="441" width="13.0" height="1" fill="rgb(0,157,109)" shape-rendering="geometricPrecision"/>
<rect x="1328.9" y="442" width="12.1" height="1" fill="rgb(0,99,81)" shape-rendering="geometricPrecision"/>
<rect x="1329.8" y="443" width="11.2" height="1" fill="rgb(0,153,145)" shape-rendering="geometricPrecision"/>
<rect x="1330.7" y="444" width="10.3" height="1" fill="rgb(0,96,104)" shape-rendering="geometricPrecision"/>
<rect x="1331.6" y="445" width="9.4" height="1" fill="rgb(0,141,174)" shape-rendering="geometricPrecision"/>
<rect x="1332.0" y="446" width="9.0" height="1" fill="rgb(0,86,113)" shape-rendering="geometricPrecision"/>
<rect x="1332.0" y="447" width="9.0" height="1" fill="rgb(0,135,177)" shape-rendering="geometricPrecision"/>
<rect x="1332.0" y="448" width="9.0" height="1" fill="rgb(0,86,113)" shape-rendering="geometricPrecision"/>
<rect x="1332.0" y="449" width="9.0" height="1" fill="rgb(0,135,177)" shape-rendering="geometricPrecision"/>
<rect x="1332.0" y="450" width="9.0" height="1" fill="rgb(0,86,113)" shape-rendering="geometricPrecision"/>
<rect x="1332.0" y="451" width="9.0" height="1" fill="rgb(0,135,177)" shape-rendering="geometricPrecision"/>
<rect x="1332.0" y="452" width="9.0" height="1" fill="rgb(0,86,113)" shape-rendering="geometricPrecision"/>
<rect x="1331.8" y="453" width="9.2" height="1" fill="rgb(0,138,175)" shape-rendering="geometricPrecision"/>
<rect x="1330.5" y="454" width="10.5" height="1" fill="rgb(0,96,102)" shape-rendering="geometricPrecision"/>
<rect x="1329.2" y="455" width="11.7" height="1" fill="rgb(0,154,135)" shape-rendering="geometricPrecision"/>
<rect x="1328.0" y="456" width="13.0" height="1" fill="rgb(0,100,70)" shape-rendering="geometricPrecision"/>
<rect x="1326.8" y="457" width="14.2" height="1" fill="rgb(0,160,85)" shape-rendering="geometricPrecision"/>
<rect x="1325.5" y="458" width="15.5" height="1" fill="rgb(1,104,40)" shape-rendering="geometricPrecision"/>
<rect x="1324.2" y="459" width="16.8" height="1" fill="rgb(6,166,41)" shape-rendering="geometricPrecision"/>
<rect x="1323.0" y="460" width="18.0" height="1" fill="rgb(6,108,12)" shape-rendering="geometricPrecision"/>
<rect x="1322.6" y="461" width="18.4" height="1" fill="rgb(12,170,19)" shape-rendering="geometricPrecision"/>
<rect x="1322.3" y="462" width="18.7" height="1" fill="rgb(9,109,11)" shape-rendering="geometricPrecision"/>
<rect x="1321.9" y="463" width="19.1" height="1" fill="rgb(18,172,18)" shape-rendering="geometricPrecision"/>
<rect x="1321.6" y="464" width="19.4" height="1" fill="rgb(13,110,10)" shape-rendering="geometricPrecision"/>
<rect x="1321.2" y="465" width="19.8" height="1" fill="rgb(24,174,17)" shape-rendering="geometricPrecision"/>
<rect x="1320.9" y="466" width="20.1" height="1" fill="rgb(17,112,10)" shape-rendering="geometricPrecision"/>
<rect x="1320.5" y="467" width="20.5" height="1" fill="rgb(30,176,15)" shape-rendering="geometricPrecision"/>
<rect x="1320.3" y="468" width="20.7" height="1" fill="rgb(20,112,9)" shape-rendering="geometricPrecision"/>
<rect x="1320.4" y="469" width="20.6" height="1" fill="rgb(31,176,15)" shape-rendering="geometricPrecision"/>
<rect x="1320.5" y="470" width="20.5" height="1" fill="rgb(19,112,9)" shape-rendering="geometricPrecision"/>
<rect x="1320.6" y="471" width="20.4" height="1" fill="rgb(29,175,16)" shape-rendering="geometricPrecision"/>
<rect x="1320.7" y="472" width="20.3" height="1" fill="rgb(18,112,10)" shape-rendering="geometricPrecision"/>
<rect x="1320.8" y="473" width="20.2" height="1" fill="rgb(28,175,16)" shape-rendering="geometricPrecision"/>
<rect x="1320.9" y="474" width="20.1" height="1" fill="rgb(17,112,10)" shape-rendering="geometricPrecision"/>
<rect x="1321.0" y="475" width="20.0" height="1" fill="rgb(26,175,16)" shape-rendering="geometricPrecision"/>
<rect x="1320.1" y="476" width="20.9" height="1" fill="rgb(21,113,9)" shape-rendering="geometricPrecision"/>
<rect x="1319.2" y="477" width="21.8" height="1" fill="rgb(41,179,13)" shape-rendering="geometricPrecision"/>
<rect x="1318.2" y="478" width="22.8" height="1" fill="rgb(31,115,7)" shape-rendering="geometricPrecision"/>
<rect x="1317.3" y="479" width="23.7" height="1" fill="rgb(57,184,10)" shape-rendering="geometricPrecision"/>
<rect x="1316.4" y="480" width="24.6" height="1" fill="rgb(43,117,5)" shape-rendering="geometricPrecision"/>
<rect x="1315.5" y="481" width="25.5" height="1" fill="rgb(82,181,6)" shape-rendering="geometricPrecision"/>
<rect x="1314.6" y="482" width="26.4" height="1" fill="rgb(61,113,3)" shape-rendering="geometricPrecision"/>
<rect x="1314.2" y="483" width="26.8" height="1" fill="rgb(102,177,4)" shape-rendering="geometricPrecision"/>
<rect x="1314.2" y="484" width="26.8" height="1" fill="rgb(65,113,2)" shape-rendering="geometricPrecision"/>
<rect x="1314.2" y="485" width="26.8" height="1" fill="rgb(102,177,4)" shape-rendering="geometricPrecision"/>
<rect x="1314.2" y="486" width="26.8" height="1" fill="rgb(65,113,2)" shape-rendering="geometricPrecision"/>
<rect x="1314.2" y="487" width="26.8" height="1" fill="rgb(102,177,4)" shape-rendering="geometricPrecision"/>
<rect x="1315.4" y="488" width="25.6" height="1" fill="rgb(53,115,3)" shape-rendering="geometricPrecision"/>
<rect x="1316.6" y="489" width="24.4" height="1" fill="rgb(65,184,9)" shape-rendering="geometricPrecision"/>
<rect x="1317.9" y="490" width="23.1" height="1" fill="rgb(33,116,7)" shape-rendering="geometricPrecision"/>
<rect x="1319.1" y="491" width="21.9" height="1" fill="rgb(42,179,13)" shape-rendering="geometricPrecision"/>
<rect x="1320.3" y="492" width="20.7" height="1" fill="rgb(20,112,9)" shape-rendering="geometricPrecision"/>
<rect x="1321.9" y="493" width="19.1" height="1" fill="rgb(19,172,18)" shape-rendering="geometricPrecision"/>
<rect x="1323.5" y="494" width="17.5" height="1" fill="rgb(5,107,18)" shape-rendering="geometricPrecision"/>
<rect x="1325.2" y="495" width="15.8" height="1" fill="rgb(4,164,57)" shape-rendering="geometricPrecision"/>
<rect x="1326.8" y="496" width="14.2" height="1" fill="rgb(0,102,55)" shape-rendering="geometricPrecision"/>
<rect x="1328.4" y="497" width="12.6" height="1" fill="rgb(0,156,117)" shape-rendering="geometricPrecision"/>
<rect x="1330.0" y="498" width="11.0" height="1" fill="rgb(0,97,96)" shape-rendering="geometricPrecision"/>
<rect x="1331.6" y="499" width="9.4" height="1" fill="rgb(0,140,174)" shape-rendering="geometricPrecision"/>
<rect x="1332.8" y="500" width="8.2" height="1" fill="rgb(0,78,117)" shape-rendering="geometricPrecision"/>
<rect x="1333.2" y="501" width="7.8" height="1" fill="rgb(0,117,186)" shape-rendering="geometricPrecision"/>
<rect x="1333.5" y="502" width="7.5" height="1" fill="rgb(0,71,120)" shape-rendering="geometricPrecision"/>
<rect x="1333.9" y="503" width="7.1" height="1" fill="rgb(0,105,192)" shape-rendering="geometricPrecision"/>
<rect x="1334.3" y="504" width="6.7" height="1" fill="rgb(0,64,124)" shape-rendering="geometricPrecision"/>
<rect x="1334.7" y="505" width="6.3" height="1" fill="rgb(0,94,197)" shape-rendering="geometricPrecision"/>
<rect x="1334.8" y="506" width="6.2" height="1" fill="rgb(0,59,126)" shape-rendering="geometricPrecision"/>
<rect x="1334.0" y="507" width="7.0" height="1" fill="rgb(0,104,192)" shape-rendering="geometricPrecision"/>
<rect x="1333.2" y="508" width="7.8" height="1" fill="rgb(0,74,119)" shape-rendering="geometricPrecision"/>
<rect x="1332.5" y="509" width="8.5" height="1" fill="rgb(0,127,181)" shape-rendering="geometricPrecision"/>
<rect x="1331.7" y="510" width="9.3" height="1" fill="rgb(0,88,112)" shape-rendering="geometricPrecision"/>
<rect x="1331.0" y="511" width="10.0" height="1" fill="rgb(0,150,169)" shape-rendering="geometricPrecision"/>
<rect x="1330.2" y="512" width="10.8" height="1" fill="rgb(0,97,98)" shape-rendering="geometricPrecision"/>
<rect x="1330.1" y="513" width="10.9" height="1" fill="rgb(0,152,151)" shape-rendering="geometricPrecision"/>
<rect x="1330.0" y="514" width="11.0" height="1" fill="rgb(0,97,95)" shape-rendering="geometricPrecision"/>
<rect x="1329.8" y="515" width="11.2" height="1" fill="rgb(0,152,146)" shape-rendering="geometricPrecision"/>
<rect x="1329.7" y="516" width="11.3" height="1" fill="rgb(0,97,92)" shape-rendering="geometricPrecision"/>
<rect x="1329.6" y="517" width="11.4" height="1" fill="rgb(0,153,141)" shape-rendering="geometricPrecision"/>
<rect x="1329.5" y="518" width="11.5" height="1" fill="rgb(0,97,88)" shape-rendering="geometricPrecision"/>
<rect x="1329.3" y="519" width="11.7" height="1" fill="rgb(0,154,136)" shape-rendering="geometricPrecision"/>
<rect x="1329.2" y="520" width="11.8" height="1" fill="rgb(0,98,85)" shape-rendering="geometricPrecision"/>
<rect x="1329.1" y="521" width="11.9" height="1" fill="rgb(0,154,131)" shape-rendering="geometricPrecision"/>
<rect x="1329.0" y="522" width="12.0" height="1" fill="rgb(0,98,83)" shape-rendering="geometricPrecision"/>
<rect x="1329.2" y="523" width="11.8" height="1" fill="rgb(0,154,134)" shape-rendering="geometricPrecision"/>
<rect x="1329.4" y="524" width="11.6" height="1" fill="rgb(0,98,87)" shape-rendering="geometricPrecision"/>
<rect x="1329.5" y="525" width="11.5" height="1" fill="rgb(0,153,140)" shape-rendering="geometricPrecision"/>
<rect x="1329.7" y="526" width="11.3" height="1" fill="rgb(0,97,92)" shape-rendering="geometricPrecision"/>
<rect x="1329.9" y="527" width="11.1" height="1" fill="rgb(0,152,147)" shape-rendering="geometricPrecision"/>
<rect x="1330.0" y="528" width="11.0" height="1" fill="rgb(0,97,96)" shape-rendering="geometricPrecision"/>
<rect x="1330.2" y="529" width="10.8" height="1" fill="rgb(0,152,154)" shape-rendering="geometricPrecision"/>
<rect x="1329.2" y="530" width="11.8" height="1" fill="rgb(0,98,85)" shape-rendering="geometricPrecision"/>
<rect x="1328.3" y="531" width="12.7" height="1" fill="rgb(0,156,115)" shape-rendering="geometricPrecision"/>
<rect x="1327.3" y="532" width="13.7" height="1" fill="rgb(0,101,61)" shape-rendering="geometricPrecision"/>
<rect x="1326.4" y="533" width="14.6" height="1" fill="rgb(1,161,78)" shape-rendering="geometricPrecision"/>
<rect x="1325.4" y="534" width="15.6" height="1" fill="rgb(2,104,39)" shape-rendering="geometricPrecision"/>
<rect x="1324.4" y="535" width="16.6" height="1" fill="rgb(6,166,45)" shape-rendering="geometricPrecision"/>
<rect x="1323.5" y="536" width="17.5" height="1" fill="rgb(5,107,17)" shape-rendering="geometricPrecision"/>
<rect x="1322.8" y="537" width="18.2" height="1" fill="rgb(11,170,19)" shape-rendering="geometricPrecision"/>
<rect x="1322.5" y="538" width="18.5" height="1" fill="rgb(8,109,12)" shape-rendering="geometricPrecision"/>
<rect x="1322.2" y="539" width="18.8" height="1" fill="rgb(16,172,18)" shape-rendering="geometricPrecision"/>
<rect x="1321.8" y="540" width="19.2" height="1" fill="rgb(12,110,11)" shape-rendering="geometricPrecision"/>
<rect x="1321.5" y="541" width="19.5" height="1" fill="rgb(22,173,17)" shape-rendering="geometricPrecision"/>
<rect x="1321.2" y="542" width="19.8" height="1" fill="rgb(16,111,10)" shape-rendering="geometricPrecision"/>
<rect x="1320.8" y="543" width="20.2" height="1" fill="rgb(28,175,16)" shape-rendering="geometricPrecision"/>
<rect x="1320.5" y="544" width="20.5" height="1" fill="rgb(19,112,9)" shape-rendering="geometricPrecision"/>
<rect x="1320.3" y="545" width="20.7" height="1" fill="rgb(32,176,15)" shape-rendering="geometricPrecision"/>
<rect x="1320.3" y="546" width="20.7" height="1" fill="rgb(20,112,9)" shape-rendering="geometricPrecision"/>
<rect x="1320.3" y="547" width="20.7" height="1" fill="rgb(32,176,15)" shape-rendering="geometricPrecision"/>
<rect x="1320.3" y="548" width="20.7" height="1" fill="rgb(20,112,9)" shape-rendering="geometricPrecision"/>
<rect x="1320.3" y="549" width="20.7" height="1" fill="rgb(32,176,15)" shape-rendering="geometricPrecision"/>
<rect x="1320.3" y="550" width="20.7" height="1" fill="rgb(20,112,9)" shape-rendering="geometricPrecision"/>
<rect x="1320.3" y="551" width="20.7" height="1" fill="rgb(32,176,15)" shape-rendering="geometricPrecision"/>
<rect x="1320.3" y="552" width="20.7" height="1" fill="rgb(20,112,9)" shape-rendering="geometricPrecision"/>
<rect x="1320.3" y="553" width="20.7" height="1" fill="rgb(32,176,15)" shape-rendering="geometricPrecision"/>
<rect x="1320.3" y="554" width="20.7" height="1" fill="rgb(20,112,9)" shape-rendering="geometricPrecision"/>
<rect x="1320.5" y="555" width="20.5" height="1" fill="rgb(30,176,15)" shape-rendering="geometricPrecision"/>
<rect x="1320.9" y="556" width="20.1" height="1" fill="rgb(17,112,10)" shape-rendering="geometricPrecision"/>
<rect x="1321.3" y="557" width="19.7" height="1" fill="rgb(24,174,17)" shape-rendering="geometricPrecision"/>
<rect x="1321.7" y="558" width="19.3" height="1" fill="rgb(12,110,10)" shape-rendering="geometricPrecision"/>
<rect x="1322.1" y="559" width="18.9" height="1" fill="rgb(17,172,18)" shape-rendering="geometricPrecision"/>
<rect x="1322.5" y="560" width="18.5" height="1" fill="rgb(8,109,12)" shape-rendering="geometricPrecision"/>
<rect x="1322.8" y="561" width="18.2" height="1" fill="rgb(11,170,19)" shape-rendering="geometricPrecision"/>
<rect x="1323.2" y="562" width="17.8" height="1" fill="rgb(5,108,15)" shape-rendering="geometricPrecision"/>
<rect x="1323.6" y="563" width="17.4" height="1" fill="rgb(8,168,30)" shape-rendering="geometricPrecision"/>
<rect x="1324.0" y="564" width="17.0" height="1" fill="rgb(4,106,23)" shape-rendering="geometricPrecision"/>
<rect x="1324.0" y="565" width="17.0" height="1" fill="rgb(7,167,37)" shape-rendering="geometricPrecision"/>
<rect x="1324.0" y="566" width="17.0" height="1" fill="rgb(4,106,23)" shape-rendering="geometricPrecision"/>
<rect x="1324.0" y="567" width="17.0" height="1" fill="rgb(7,167,37)" shape-rendering="geometricPrecision"/>
<rect x="1324.0" y="568" width="17.0" height="1" fill="rgb(4,106,23)" shape-rendering="geometricPrecision"/>
<rect x="1324.0" y="569" width="17.0" height="1" fill="rgb(7,167,37)" shape-rendering="geometricPrecision"/>
<rect x="1324.0" y="570" width="17.0" height="1" fill="rgb(4,106,23)" shape-rendering="geometricPrecision"/>
<rect x="1324.0" y="571" width="17.0" height="1" fill="rgb(7,167,37)" shape-rendering="geometricPrecision"/>
<rect x="1324.0" y="572" width="17.0" height="1" fill="rgb(4,106,23)" shape-rendering="geometricPrecision"/>
<rect x="1324.0" y="573" width="17.0" height="1" fill="rgb(7,167,37)" shape-rendering="geometricPrecision"/>
<rect x="1324.0" y="574" width="17.0" height="1" fill="rgb(4,106,23)" shape-rendering="geometricPrecision"/>
<rect x="1324.0" y="575" width="17.0" height="1" fill="rgb(7,167,37)" shape-rendering="geometricPrecision"/>
<rect x="1324.0" y="576" width="17.0" height="1" fill="rgb(4,106,23)" shape-rendering="geometricPrecision"/>
<rect x="1323.8" y="577" width="17.2" height="1" fill="rgb(7,167,34)" shape-rendering="geometricPrecision"/>
<rect x="1323.5" y="578" width="17.5" height="1" fill="rgb(5,107,17)" shape-rendering="geometricPrecision"/>
<rect x="1323.1" y="579" width="17.9" height="1" fill="rgb(9,169,21)" shape-rendering="geometricPrecision"/>
<rect x="1322.7" y="580" width="18.3" height="1" fill="rgb(7,108,12)" shape-rendering="geometricPrecision"/>
<rect x="1322.3" y="581" width="18.7" height="1" fill="rgb(15,171,18)" shape-rendering="geometricPrecision"/>
<rect x="1322.0" y="582" width="19.0" height="1" fill="rgb(11,110,11)" shape-rendering="geometricPrecision"/>
<rect x="1321.6" y="583" width="19.4" height="1" fill="rgb(21,173,17)" shape-rendering="geometricPrecision"/>
<rect x="1321.2" y="584" width="19.8" height="1" fill="rgb(15,111,10)" shape-rendering="geometricPrecision"/>
<rect x="1320.8" y="585" width="20.2" height="1" fill="rgb(28,175,16)" shape-rendering="geometricPrecision"/>
<rect x="1320.5" y="586" width="20.5" height="1" fill="rgb(19,112,9)" shape-rendering="geometricPrecision"/>
<rect x="1319.5" y="587" width="21.5" height="1" fill="rgb(39,178,14)" shape-rendering="geometricPrecision"/>
<rect x="1318.2" y="588" width="22.8" height="1" fill="rgb(32,116,7)" shape-rendering="geometricPrecision"/>
<rect x="1316.9" y="589" width="24.1" height="1" fill="rgb(62,184,9)" shape-rendering="geometricPrecision"/>
<rect x="1315.5" y="590" width="25.5" height="1" fill="rgb(52,115,4)" shape-rendering="geometricPrecision"/>
<rect x="1314.2" y="591" width="26.8" height="1" fill="rgb(102,177,4)" shape-rendering="geometricPrecision"/>
<rect x="1312.4" y="592" width="28.6" height="1" fill="rgb(82,110,0)" shape-rendering="geometricPrecision"/>
<rect x="1310.6" y="593" width="30.4" height="1" fill="rgb(149,164,0)" shape-rendering="geometricPrecision"/>
<rect x="1308.8" y="594" width="32.2" height="1" fill="rgb(106,98,0)" shape-rendering="geometricPrecision"/>
<rect x="1307.0" y="595" width="34.0" height="1" fill="rgb(184,133,0)" shape-rendering="geometricPrecision"/>
<rect x="1304.5" y="596" width="36.5" height="1" fill="rgb(131,57,0)" shape-rendering="geometricPrecision"/>
<rect x="1301.9" y="597" width="39.1" height="1" fill="rgb(220,43,0)" shape-rendering="geometricPrecision"/>
<rect x="1299.4" y="598" width="41.6" height="1" fill="rgb(160,3,0)" shape-rendering="geometricPrecision"/>
<rect x="1299.3" y="599" width="41.7" height="1" fill="rgb(251,4,0)" shape-rendering="geometricPrecision"/>
<rect x="1299.2" y="600" width="41.8" height="1" fill="rgb(161,1,0)" shape-rendering="geometricPrecision"/>
<rect x="1299.1" y="601" width="41.9" height="1" fill="rgb(253,1,0)" shape-rendering="geometricPrecision"/>
<rect x="1299.0" y="602" width="42.0" height="1" fill="rgb(163,0,0)" shape-rendering="geometricPrecision"/>
<rect x="1300.3" y="603" width="40.7" height="1" fill="rgb(239,19,0)" shape-rendering="geometricPrecision"/>
<rect x="1301.7" y="604" width="39.4" height="1" fill="rgb(143,24,0)" shape-rendering="geometricPrecision"/>
<rect x="1303.0" y="605" width="38.0" height="1" fill="rgb(214,62,0)" shape-rendering="geometricPrecision"/>
<rect x="1304.3" y="606" width="36.7" height="1" fill="rgb(131,55,0)" shape-rendering="geometricPrecision"/>
<rect x="1305.9" y="607" width="35.1" height="1" fill="rgb(193,115,0)" shape-rendering="geometricPrecision"/>
<rect x="1307.6" y="608" width="33.4" height="1" fill="rgb(114,90,0)" shape-rendering="geometricPrecision"/>
<rect x="1309.2" y="609" width="31.8" height="1" fill="rgb(163,156,0)" shape-rendering="geometricPrecision"/>
<rect x="1310.7" y="610" width="30.3" height="1" fill="rgb(94,104,0)" shape-rendering="geometricPrecision"/>
<rect x="1311.7" y="611" width="29.3" height="1" fill="rgb(138,170,0)" shape-rendering="geometricPrecision"/>
<rect x="1312.7" y="612" width="28.3" height="1" fill="rgb(79,110,0)" shape-rendering="geometricPrecision"/>
<rect x="1313.7" y="613" width="27.3" height="1" fill="rgb(109,176,3)" shape-rendering="geometricPrecision"/>
<rect x="1314.7" y="614" width="26.3" height="1" fill="rgb(60,114,3)" shape-rendering="geometricPrecision"/>
<rect x="1315.5" y="615" width="25.5" height="1" fill="rgb(83,180,6)" shape-rendering="geometricPrecision"/>
<rect x="1315.7" y="616" width="25.3" height="1" fill="rgb(51,115,4)" shape-rendering="geometricPrecision"/>
<rect x="1315.8" y="617" width="25.2" height="1" fill="rgb(77,181,7)" shape-rendering="geometricPrecision"/>
<rect x="1316.0" y="618" width="25.0" height="1" fill="rgb(47,116,5)" shape-rendering="geometricPrecision"/>
<rect x="1316.2" y="619" width="24.8" height="1" fill="rgb(71,182,8)" shape-rendering="geometricPrecision"/>
<rect x="1316.4" y="620" width="24.6" height="1" fill="rgb(43,117,5)" shape-rendering="geometricPrecision"/>
<rect x="1316.6" y="621" width="24.4" height="1" fill="rgb(65,183,9)" shape-rendering="geometricPrecision"/>
<rect x="1316.8" y="622" width="24.2" height="1" fill="rgb(39,117,5)" shape-rendering="geometricPrecision"/>
<rect x="1317.0" y="623" width="24.0" height="1" fill="rgb(60,185,10)" shape-rendering="geometricPrecision"/>
<rect x="1317.2" y="624" width="23.8" height="1" fill="rgb(37,117,6)" shape-rendering="geometricPrecision"/>
<rect x="1317.3" y="625" width="23.7" height="1" fill="rgb(57,184,10)" shape-rendering="geometricPrecision"/>
<rect x="1317.5" y="626" width="23.5" height="1" fill="rgb(35,117,6)" shape-rendering="geometricPrecision"/>
<rect x="1317.6" y="627" width="23.4" height="1" fill="rgb(54,183,11)" shape-rendering="geometricPrecision"/>
<rect x="1317.8" y="628" width="23.2" height="1" fill="rgb(33,117,7)" shape-rendering="geometricPrecision"/>
<rect x="1318.0" y="629" width="23.0" height="1" fill="rgb(51,182,11)" shape-rendering="geometricPrecision"/>
<rect x="1318.1" y="630" width="22.9" height="1" fill="rgb(32,116,7)" shape-rendering="geometricPrecision"/>
<rect x="1318.3" y="631" width="22.7" height="1" fill="rgb(49,181,12)" shape-rendering="geometricPrecision"/>
<rect x="1318.4" y="632" width="22.6" height="1" fill="rgb(30,115,7)" shape-rendering="geometricPrecision"/>
<rect x="1318.6" y="633" width="22.4" height="1" fill="rgb(46,181,12)" shape-rendering="geometricPrecision"/>
<rect x="1317.7" y="634" width="23.3" height="1" fill="rgb(33,117,7)" shape-rendering="geometricPrecision"/>
<rect x="1316.8" y="635" width="24.2" height="1" fill="rgb(62,184,9)" shape-rendering="geometricPrecision"/>
<rect x="1316.0" y="636" width="25.0" height="1" fill="rgb(48,116,4)" shape-rendering="geometricPrecision"/>
<rect x="1315.1" y="637" width="25.9" height="1" fill="rgb(88,180,6)" shape-rendering="geometricPrecision"/>
<rect x="1314.2" y="638" width="26.8" height="1" fill="rgb(65,113,2)" shape-rendering="geometricPrecision"/>
<rect x="1313.3" y="639" width="27.7" height="1" fill="rgb(115,175,2)" shape-rendering="geometricPrecision"/>
<rect x="1312.4" y="640" width="28.6" height="1" fill="rgb(81,110,0)" shape-rendering="geometricPrecision"/>
<rect x="1311.7" y="641" width="29.3" height="1" fill="rgb(138,170,0)" shape-rendering="geometricPrecision"/>
<rect x="1311.1" y="642" width="29.9" height="1" fill="rgb(92,106,0)" shape-rendering="geometricPrecision"/>
<rect x="1310.4" y="643" width="30.6" height="1" fill="rgb(151,163,0)" shape-rendering="geometricPrecision"/>
<rect x="1309.8" y="644" width="31.2" height="1" fill="rgb(100,101,0)" shape-rendering="geometricPrecision"/>
<rect x="1309.2" y="645" width="31.8" height="1" fill="rgb(163,156,0)" shape-rendering="geometricPrecision"/>
<rect x="1308.6" y="646" width="32.4" height="1" fill="rgb(108,97,0)" shape-rendering="geometricPrecision"/>
<rect x="1307.9" y="647" width="33.1" height="1" fill="rgb(176,148,0)" shape-rendering="geometricPrecision"/>
<rect x="1307.3" y="648" width="33.7" height="1" fill="rgb(116,88,0)" shape-rendering="geometricPrecision"/>
<rect x="1308.0" y="649" width="33.0" height="1" fill="rgb(176,149,0)" shape-rendering="geometricPrecision"/>
<rect x="1308.6" y="650" width="32.4" height="1" fill="rgb(108,97,0)" shape-rendering="geometricPrecision"/>
<rect x="1309.3" y="651" width="31.7" height="1" fill="rgb(162,157,0)" shape-rendering="geometricPrecision"/>
<rect x="1310.0" y="652" width="31.0" height="1" fill="rgb(99,102,0)" shape-rendering="geometricPrecision"/>
<rect x="1310.7" y="653" width="30.3" height="1" fill="rgb(148,164,0)" shape-rendering="geometricPrecision"/>
<rect x="1311.3" y="654" width="29.7" height="1" fill="rgb(90,107,0)" shape-rendering="geometricPrecision"/>
<rect x="1312.0" y="655" width="29.0" height="1" fill="rgb(135,172,0)" shape-rendering="geometricPrecision"/>
<rect x="1312.9" y="656" width="28.1" height="1" fill="rgb(77,111,0)" shape-rendering="geometricPrecision"/>
<rect x="1313.8" y="657" width="27.2" height="1" fill="rgb(107,176,3)" shape-rendering="geometricPrecision"/>
<rect x="1314.7" y="658" width="26.3" height="1" fill="rgb(60,114,3)" shape-rendering="geometricPrecision"/>
<rect x="1315.6" y="659" width="25.4" height="1" fill="rgb(80,181,7)" shape-rendering="geometricPrecision"/>
<rect x="1316.5" y="660" width="24.5" height="1" fill="rgb(42,117,5)" shape-rendering="geometricPrecision"/>
<rect x="1317.5" y="661" width="23.5" height="1" fill="rgb(56,183,10)" shape-rendering="geometricPrecision"/>
<rect x="1318.4" y="662" width="22.6" height="1" fill="rgb(30,115,7)" shape-rendering="geometricPrecision"/>
<rect x="1319.3" y="663" width="21.7" height="1" fill="rgb(40,179,13)" shape-rendering="geometricPrecision"/>
<rect x="1320.3" y="664" width="20.7" height="1" fill="rgb(20,112,9)" shape-rendering="geometricPrecision"/>
<rect x="1321.4" y="665" width="19.6" height="1" fill="rgb(23,174,17)" shape-rendering="geometricPrecision"/>
<rect x="1322.4" y="666" width="18.6" height="1" fill="rgb(9,109,11)" shape-rendering="geometricPrecision"/>
<rect x="1323.4" y="667" width="17.6" height="1" fill="rgb(8,168,27)" shape-rendering="geometricPrecision"/>
<rect x="1324.4" y="668" width="16.6" height="1" fill="rgb(3,106,28)" shape-rendering="geometricPrecision"/>
<rect x="1325.5" y="669" width="15.5" height="1" fill="rgb(3,163,63)" shape-rendering="geometricPrecision"/>
<rect x="1326.5" y="670" width="14.5" height="1" fill="rgb(0,103,51)" shape-rendering="geometricPrecision"/>
<rect x="1326.8" y="671" width="14.2" height="1" fill="rgb(0,160,87)" shape-rendering="geometricPrecision"/>
<rect x="1327.2" y="672" width="13.8" height="1" fill="rgb(0,101,59)" shape-rendering="geometricPrecision"/>
<rect x="1327.5" y="673" width="13.5" height="1" fill="rgb(0,158,100)" shape-rendering="geometricPrecision"/>
<rect x="1327.9" y="674" width="13.1" height="1" fill="rgb(0,100,68)" shape-rendering="geometricPrecision"/>
<rect x="1328.2" y="675" width="12.8" height="1" fill="rgb(0,157,113)" shape-rendering="geometricPrecision"/>
<rect x="1328.5" y="676" width="12.5" height="1" fill="rgb(0,99,76)" shape-rendering="geometricPrecision"/>
<rect x="1328.9" y="677" width="12.1" height="1" fill="rgb(0,155,127)" shape-rendering="geometricPrecision"/>
<rect x="1329.3" y="678" width="11.7" height="1" fill="rgb(0,98,86)" shape-rendering="geometricPrecision"/>
<rect x="1329.8" y="679" width="11.2" height="1" fill="rgb(0,153,145)" shape-rendering="geometricPrecision"/>
<rect x="1330.2" y="680" width="10.8" height="1" fill="rgb(0,96,98)" shape-rendering="geometricPrecision"/>
<rect x="1330.7" y="681" width="10.3" height="1" fill="rgb(0,150,164)" shape-rendering="geometricPrecision"/>
<rect x="1331.2" y="682" width="9.8" height="1" fill="rgb(0,94,109)" shape-rendering="geometricPrecision"/>
<rect x="1331.7" y="683" width="9.3" height="1" fill="rgb(0,140,174)" shape-rendering="geometricPrecision"/>
<rect x="1332.1" y="684" width="8.9" height="1" fill="rgb(0,85,113)" shape-rendering="geometricPrecision"/>
<rect x="1332.6" y="685" width="8.4" height="1" fill="rgb(0,126,182)" shape-rendering="geometricPrecision"/>
<rect x="1332.9" y="686" width="8.1" height="1" fill="rgb(0,76,117)" shape-rendering="geometricPrecision"/>
<rect x="1333.3" y="687" width="7.7" height="1" fill="rgb(0,115,187)" shape-rendering="geometricPrecision"/>
<rect x="1333.6" y="688" width="7.4" height="1" fill="rgb(0,70,120)" shape-rendering="geometricPrecision"/>
<rect x="1334.0" y="689" width="7.0" height="1" fill="rgb(0,105,192)" shape-rendering="geometricPrecision"/>
<rect x="1334.3" y="690" width="6.7" height="1" fill="rgb(0,64,124)" shape-rendering="geometricPrecision"/>
<rect x="1334.7" y="691" width="6.3" height="1" fill="rgb(0,95,197)" shape-rendering="geometricPrecision"/>
<rect x="1335.0" y="692" width="6.0" height="1" fill="rgb(0,57,128)" shape-rendering="geometricPrecision"/>
<rect x="1335.1" y="693" width="5.9" height="1" fill="rgb(0,89,200)" shape-rendering="geometricPrecision"/>
<rect x="1335.2" y="694" width="5.8" height="1" fill="rgb(0,56,128)" shape-rendering="geometricPrecision"/>
<rect x="1335.3" y="695" width="5.7" height="1" fill="rgb(0,87,200)" shape-rendering="geometricPrecision"/>
<rect x="1335.4" y="696" width="5.6" height="1" fill="rgb(0,55,128)" shape-rendering="geometricPrecision"/>
<rect x="1335.5" y="697" width="5.5" height="1" fill="rgb(0,85,200)" shape-rendering="geometricPrecision"/>
<rect x="1335.6" y="698" width="5.4" height="1" fill="rgb(0,54,128)" shape-rendering="geometricPrecision"/>
<rect x="1335.7" y="699" width="5.3" height="1" fill="rgb(0,84,200)" shape-rendering="geometricPrecision"/>
<rect x="1335.8" y="700" width="5.2" height="1" fill="rgb(0,53,128)" shape-rendering="geometricPrecision"/>
<rect x="1335.9" y="701" width="5.1" height="1" fill="rgb(0,82,200)" shape-rendering="geometricPrecision"/>
<rect x="1336.0" y="702" width="5.0" height="1" fill="rgb(0,51,128)" shape-rendering="geometricPrecision"/>
<rect x="1336.1" y="703" width="4.9" height="1" fill="rgb(0,80,200)" shape-rendering="geometricPrecision"/>
<rect x="1336.2" y="704" width="4.8" height="1" fill="rgb(0,50,128)" shape-rendering="geometricPrecision"/>
<rect x="1336.3" y="705" width="4.7" height="1" fill="rgb(0,78,200)" shape-rendering="geometricPrecision"/>
<rect x="1336.4" y="706" width="4.6" height="1" fill="rgb(0,49,128)" shape-rendering="geometricPrecision"/>
<rect x="1336.5" y="707" width="4.5" height="1" fill="rgb(0,77,200)" shape-rendering="geometricPrecision"/>
<rect x="1336.6" y="708" width="4.4" height="1" fill="rgb(0,48,128)" shape-rendering="geometricPrecision"/>
<rect x="1336.8" y="709" width="4.2" height="1" fill="rgb(0,75,200)" shape-rendering="geometricPrecision"/>
<rect x="1336.9" y="710" width="4.1" height="1" fill="rgb(0,47,128)" shape-rendering="geometricPrecision"/>
<rect x="1337.0" y="711" width="4.0" height="1" fill="rgb(0,73,200)" shape-rendering="geometricPrecision"/>
<rect x="1337.1" y="712" width="3.9" height="1" fill="rgb(0,46,128)" shape-rendering="geometricPrecision"/>
<rect x="1337.2" y="713" width="3.8" height="1" fill="rgb(0,71,200)" shape-rendering="geometricPrecision"/>
<rect x="1337.3" y="714" width="3.7" height="1" fill="rgb(0,44,128)" shape-rendering="geometricPrecision"/>
<rect x="1337.4" y="715" width="3.6" height="1" fill="rgb(0,69,200)" shape-rendering="geometricPrecision"/>
<rect x="1337.5" y="716" width="3.5" height="1" fill="rgb(0,44,128)" shape-rendering="geometricPrecision"/>
<rect x="1337.6" y="717" width="3.4" height="1" fill="rgb(0,68,200)" shape-rendering="geometricPrecision"/>
<rect x="1337.8" y="718" width="3.2" height="1" fill="rgb(0,42,128)" shape-rendering="geometricPrecision"/>
<rect x="1338.0" y="719" width="3.0" height="1" fill="rgb(0,64,200)" shape-rendering="geometricPrecision"/>
<rect x="1338.2" y="720" width="2.8" height="1" fill="rgb(0,40,128)" shape-rendering="geometricPrecision"/>
<rect x="1338.4" y="721" width="2.6" height="1" fill="rgb(0,61,200)" shape-rendering="geometricPrecision"/>
<rect x="1338.6" y="722" width="2.4" height="1" fill="rgb(0,37,128)" shape-rendering="geometricPrecision"/>
<rect x="1338.8" y="723" width="2.2" height="1" fill="rgb(0,58,200)" shape-rendering="geometricPrecision"/>
<rect x="1339.0" y="724" width="2.0" height="1" fill="rgb(0,35,128)" shape-rendering="geometricPrecision"/>
<rect x="1339.2" y="725" width="1.8" height="1" fill="rgb(0,54,200)" shape-rendering="geometricPrecision"/>
<rect x="1339.4" y="726" width="1.6" height="1" fill="rgb(0,33,128)" shape-rendering="geometricPrecision"/>
<rect x="1339.6" y="727" width="1.4" height="1" fill="rgb(0,51,200)" shape-rendering="geometricPrecision"/>
<rect x="1339.8" y="728" width="1.2" height="1" fill="rgb(0,31,128)" shape-rendering="geometricPrecision"/>
<rect x="1340.0" y="729" width="1.0" height="1" fill="rgb(0,48,200)" shape-rendering="geometricPrecision"/>
<rect x="1340.2" y="730" width="0.8" height="1" fill="rgb(0,29,128)" shape-rendering="geometricPrecision"/>
<rect x="1340.5" y="731" width="0.5" height="1" fill="rgb(0,44,200)" shape-rendering="geometricPrecision"/>
<g clip-path="url(#plot)">
<text x="104" y="656" font-family='"Liberation Sans", Arial, sans-serif' font-size="12" fill="#ff0000" text-anchor="middle">-39.7</text>
<text x="104" y="671" font-family='"Liberation Sans", Arial, sans-serif' font-size="12" fill="#ff0000" text-anchor="middle">LL</text>
<text x="296" y="756" font-family='"Liberation Sans", Arial, sans-serif' font-size="12" fill="#ff0000" text-anchor="middle">-32.7</text>
<text x="296" y="771" font-family='"Liberation Sans", Arial, sans-serif' font-size="12" fill="#ff0000" text-anchor="middle">LL</text>
<text x="332" y="767" font-family='"Liberation Sans", Arial, sans-serif' font-size="12" fill="#ff0000" text-anchor="middle">-14.5</text>
<text x="332" y="782" font-family='"Liberation Sans", Arial, sans-serif' font-size="12" fill="#ff0000" text-anchor="middle">LL</text>
<text x="314" y="620" font-family='"Liberation Sans", Arial, sans-serif' font-size="12" fill="#ff0000" text-anchor="middle">LH</text>
<text x="314" y="635" font-family='"Liberation Sans", Arial, sans-serif' font-size="12" fill="#ff0000" text-anchor="middle">12.9</text>
<text x="367" y="554" font-family='"Liberation Sans", Arial, sans-serif' font-size="12" fill="#008000" text-anchor="middle">HH</text>
<text x="367" y="569" font-family='"Liberation Sans", Arial, sans-serif' font-size="12" fill="#008000" text-anchor="middle">23.9</text>
<text x="457" y="735" font-family='"Liberation Sans", Arial, sans-serif' font-size="12" fill="#008000" text-anchor="middle">-19.4</text>
<text x="457" y="750" font-family='"Liberation Sans", Arial, sans-serif' font-size="12" fill="#008000" text-anchor="middle">HL</text>
<text x="517" y="564" font-family='"Liberation Sans", Arial, sans-serif' font-size="12" fill="#ff0000" text-anchor="middle">LH</text>
<text x="517" y="579" font-family='"Liberation Sans", Arial, sans-serif' font-size="12" fill="#ff0000" text-anchor="middle">17.9</text>
<text x="536" y="697" font-family='"Liberation Sans", Arial, sans-serif' font-size="12" fill="#008000" text-anchor="middle">-12.6</text>
<text x="536" y="712" font-family='"Liberation Sans", Arial, sans-serif' font-size="12" fill="#008000" text-anchor="middle">HL</text>
<text x="607" y="413" font-family='"Liberation Sans", Arial, sans-serif' font-size="12" fill="#008000" text-anchor="middle">HH</text>
<text x="607" y="428" font-family='"Liberation Sans", Arial, sans-serif' font-size="12" fill="#008000" text-anchor="middle">34.1</text>
<text x="656" y="587" font-family='"Liberation Sans", Arial, sans-serif' font-size="12" fill="#008000" text-anchor="middle">-18.3</text>
<text x="656" y="602" font-family='"Liberation Sans", Arial, sans-serif' font-size="12" fill="#008000" text-anchor="middle">HL</text>
<text x="745" y="301" font-family='"Liberation Sans", Arial, sans-serif' font-size="12" fill="#008000" text-anchor="middle">HH</text>
<text x="745" y="316" font-family='"Liberation Sans", Arial, sans-serif' font-size="12" fill="#008000" text-anchor="middle">34.2</text>
<text x="787" y="449" font-family='"Liberation Sans", Arial, sans-serif' font-size="12" fill="#008000" text-anchor="middle">-14.8</text>
<text x="787" y="464" font-family='"Liberation Sans", Arial, sans-serif' font-size="12" fill="#008000" text-anchor="middle">HL</text>
<text x="913" y="102" font-family='"Liberation Sans", Arial, sans-serif' font-size="12" fill="#008000" text-anchor="middle">HH</text>
<text x="913" y="117" font-family='"Liberation Sans", Arial, sans-serif' font-size="12" fill="#008000" text-anchor="middle">42.9</text>
<text x="1147" y="269" font-family='"Liberation Sans", Arial, sans-serif' font-size="12" fill="#ff0000" text-anchor="middle">LH</text>
<text x="1147" y="284" font-family='"Liberation Sans", Arial, sans-serif' font-size="12" fill="#ff0000" text-anchor="middle">21.1</text>
<text x="1112" y="463" font-family='"Liberation Sans", Arial, sans-serif' font-size="12" fill="#ff0000" text-anchor="middle">-44.7</text>
<text x="1112" y="478" font-family='"Liberation Sans", Arial, sans-serif' font-size="12" fill="#ff0000" text-anchor="middle">LL</text>
<text x="1190" y="463" font-family='"Liberation Sans", Arial, sans-serif' font-size="12" fill="#e6b800" text-anchor="middle">-21.1</text>
<text x="1190" y="478" font-family='"Liberation Sans", Arial, sans-serif' font-size="12" fill="#e6b800" text-anchor="middle">DB</text>
<text x="1292" y="191" font-family='"Liberation Sans", Arial, sans-serif' font-size="12" fill="#008000" text-anchor="middle">HH</text>
<text x="1292" y="206" font-family='"Liberation Sans", Arial, sans-serif' font-size="12" fill="#008000" text-anchor="middle">32.3</text>
<text x="333" y="801.5" font-family='"Liberation Sans", Arial, sans-serif' font-size="14" font-weight="bold" fill="#008000" text-anchor="middle">A</text>
<text x="457" y="770.5" font-family='"Liberation Sans", Arial, sans-serif' font-size="15" font-weight="bold" fill="#008000" text-anchor="middle">C</text>
</g>
<line x1="46" y1="817.5" x2="1341" y2="817.5" stroke="#d8d8d8" stroke-width="1" stroke-dasharray="1 1"/>
<line x1="46" y1="747.5" x2="1341" y2="747.5" stroke="#d8d8d8" stroke-width="1" stroke-dasharray="1 1"/>
<line x1="46" y1="676.5" x2="1341" y2="676.5" stroke="#d8d8d8" stroke-width="1" stroke-dasharray="1 1"/>
<line x1="46" y1="606.5" x2="1341" y2="606.5" stroke="#d8d8d8" stroke-width="1" stroke-dasharray="1 1"/>
<line x1="46" y1="535.5" x2="1341" y2="535.5" stroke="#d8d8d8" stroke-width="1" stroke-dasharray="1 1"/>
<line x1="46" y1="465.5" x2="1341" y2="465.5" stroke="#d8d8d8" stroke-width="1" stroke-dasharray="1 1"/>
<line x1="46" y1="395.5" x2="1341" y2="395.5" stroke="#d8d8d8" stroke-width="1" stroke-dasharray="1 1"/>
<line x1="46" y1="324.5" x2="1341" y2="324.5" stroke="#d8d8d8" stroke-width="1" stroke-dasharray="1 1"/>
<line x1="46" y1="254.5" x2="1341" y2="254.5" stroke="#d8d8d8" stroke-width="1" stroke-dasharray="1 1"/>
<line x1="46" y1="183.5" x2="1341" y2="183.5" stroke="#d8d8d8" stroke-width="1" stroke-dasharray="1 1"/>
<line x1="46" y1="113.5" x2="1341" y2="113.5" stroke="#d8d8d8" stroke-width="1" stroke-dasharray="1 1"/>
<g clip-path="url(#plot)">
<polygon shape-rendering="geometricPrecision" fill="#c80000" points="56,489 62,495 68,508 76,516 81,520 87,532 93.5,543.5 100,553.6 108.5,558.6 115,559.4 123.6,557 130,550 136,546 140,545 140,546.5 137,550 132,560 125,568.6 118.5,570 112,577 105,585 100,582 93.5,568.6 87,553.6 81,543.5 72,537 63,520 56,517.6"/>
<polygon shape-rendering="geometricPrecision" fill="#00c800" points="138,546 142,544.5 149,545 149,547.5 142,547.5 138,548"/>
<polygon shape-rendering="geometricPrecision" fill="#c80000" points="152,546 160,548.6 167,557 173.7,562 180.4,561 187,563.6 195.4,570.3 205.5,567 212,570.3 218.8,578.6 227,583.7 234,583.7 239,578.6 245.6,575.3 250,575 250,576 245.6,576.5 239,585 232,588.7 225.5,594.5 218.8,587 212,577 205.5,570 195.4,577 187,568.6 180.4,566 173.7,570.3 167,563.6 160,552 152,547"/>
<polygon shape-rendering="geometricPrecision" fill="#c80000" points="250,575 256.5,583.75 264,595 274,612.5 284,632.5 294,646 302.75,653.75 311.5,655 319,665 326.5,673.75 335,677.5 342.75,672.5 345.5,672 345.5,673 342.75,675 335,690 329,693.75 321.5,682.5 314,673.75 306.5,675 297.75,677.5 289,673.75 281.5,655 274,632.5 264,605 256.5,587.5 250,576.5"/>
<polygon shape-rendering="geometricPrecision" fill="#00c800" points="345,672.5 351.5,655 356.5,642.5 362.75,633.75 369,631.25 375,635 381.5,632.5 389,632.5 399,627.5 406.5,620 412.75,617 419,622.5 424,628.75 425.5,629.5 425.5,630.5 424,630.5 419,627.5 412.75,625.5 406.5,627.5 399,632.5 389,634.5 381.5,635.5 375,640 369,640 362.75,643.75 356.5,653.75 351.5,667.5 345,673.5"/>
<polygon shape-rendering="geometricPrecision" fill="#c80000" points="423,628 430,634 437,636.7 443,642 449,649 454,656 462,657 468,660 473,663 477,666 480,665 485,660 490,654 495,650 498,647 498,648 495,655 490,658 485,664 480,670 477,675 474,672 470,662 466,663 461,669 456,670 452,667 447,656 443,646 437,640 430,636 423,629"/>
<polygon shape-rendering="geometricPrecision" fill="#c80000" points="508.5,643 511,642 513,643 513,646 511,647 508.5,646"/>
<polygon shape-rendering="geometricPrecision" fill="#00c800" points="495,653 499,647.5 506.5,637.5 514,632.5 521.5,632.5 526.5,635 534,643.75 541.5,642.5 549,630 559,612.5 566.5,592.5 570,585 580,555 587.5,532.5 595,510 602.5,492.5 608.75,487 615,490 625,496 635,503.75 642.5,508.75 647.5,514.5 655,514 661,510 669,501 669,504 661,513 655,516 647.5,516 642.5,510.5 637.5,509.5 630,511.25 620,515 610,520 600,528.75 590,555 580,582.5 570,605 566.5,610 559,625 549,637.5 541.5,645 534,646 526.5,640 521.5,641 514,640 506.5,643.75 499,652 495,654.5"/>
<polygon shape-rendering="geometricPrecision" fill="#c80000" points="669,500.5 680,500.5 680,503.5 669,503.5"/>
<polygon shape-rendering="geometricPrecision" fill="#00c800" points="672,499 675,496 685,477.5 690,471 700,461 710,440 720,428.75 730,420 737.5,400 745,392.5 752.5,387.5 760,392.5 765,397.5 772.5,395 777.5,392.5 780,394 780,396.5 777.5,398.75 767.5,398.5 760,401 750,410 740,416 732.5,430 725,442.5 715,450 705,468 700,475 692.5,483.75 685,487.5 675,503.75 672,504"/>
<polygon shape-rendering="geometricPrecision" fill="#00c800" points="780,394 787.5,390 795,380 802.5,367.5 810,350 820,325 830,297.5 834.5,280 847,250 857,245 867,227.5 877,220 887,200 897,191 907,178.75 914.5,176 922,176 929.5,175 937,185 947,187.5 957,190 962,195 963.5,196 963.5,197 959.5,195 952,192.5 942,192.5 932,195 924.5,192.5 917,197.5 909.5,201 902,208.75 892,220 882,235 872,250 859.5,265 847,285 840,300 830,322.5 820,345 810,367.5 802.5,380 795,387.5 787.5,396 780,396.5"/>
<polygon shape-rendering="geometricPrecision" fill="#c80000" points="963,196 972,207.5 982,225 992,230 999.5,240 1007,255 1017,267.5 1027,285 1034.5,300 1042,307.5 1051,325 1061,340 1071,347.5 1081,361 1091,366 1101,375 1108.5,382.5 1116,380 1123.5,375 1129.75,372.5 1129.75,374 1127,376 1122,382.5 1114.5,395 1107,400 1097,395 1087,385 1077,375 1067,370 1057,357.5 1047,337.5 1040.75,330 1032,317.5 1022,300 1012,285 1002,270 992,252.5 982,237.5 972,220 963,197.5"/>
<polygon shape-rendering="geometricPrecision" fill="#00c800" points="1129.5,373 1136,362.5 1143.5,345 1151,335 1156,332.5 1161,340 1166,345 1171,352.5 1173.5,355 1173.5,356.5 1171,354 1168.5,350 1163.5,346 1158.5,345 1151,347.5 1143.5,355 1136,367.5 1129.5,374.5"/>
<polygon shape-rendering="geometricPrecision" fill="#c80000" points="1180,363 1186,368.75 1193.5,371 1201,377.5 1208.5,376 1216,380 1221,381 1225,381 1225,382.5 1221,383.75 1216,385 1208.5,385 1201,385 1193.5,380 1186,375 1180,366"/>
<polygon shape-rendering="geometricPrecision" fill="#00c800" points="1224.5,381 1228.5,375 1236,360 1243.5,340 1251,320 1258.5,300 1266,280 1273.5,272.5 1281,267.5 1288.5,258.75 1293.5,260 1298.5,270 1300,272 1300,273 1298.5,275 1293.5,280 1288.5,281 1281,287.5 1273.5,300 1266,310 1258.5,325 1251,340 1243.5,355 1236,370 1228.5,378.75 1224.5,382.5"/>
<circle cx="105" cy="634" r="4" fill="#ff0000" shape-rendering="geometricPrecision"/>
<circle cx="296" cy="734" r="4" fill="#ff0000" shape-rendering="geometricPrecision"/>
<circle cx="332" cy="744" r="4" fill="#ff0000" shape-rendering="geometricPrecision"/>
<circle cx="314" cy="643" r="4" fill="#ff0000" shape-rendering="geometricPrecision"/>
<circle cx="369" cy="577" r="4" fill="#008000" shape-rendering="geometricPrecision"/>
<circle cx="458" cy="714" r="4" fill="#008000" shape-rendering="geometricPrecision"/>
<circle cx="518" cy="586" r="4" fill="#ff0000" shape-rendering="geometricPrecision"/>
<circle cx="536" cy="675" r="4" fill="#008000" shape-rendering="geometricPrecision"/>
<circle cx="608" cy="437" r="4" fill="#008000" shape-rendering="geometricPrecision"/>
<circle cx="656" cy="565" r="4" fill="#008000" shape-rendering="geometricPrecision"/>
<circle cx="746" cy="324" r="4" fill="#008000" shape-rendering="geometricPrecision"/>
<circle cx="788" cy="429" r="4" fill="#008000" shape-rendering="geometricPrecision"/>
<circle cx="914" cy="125" r="4" fill="#008000" shape-rendering="geometricPrecision"/>
<circle cx="1148" cy="293" r="4" fill="#ff0000" shape-rendering="geometricPrecision"/>
<circle cx="1112" cy="441" r="4" fill="#ff0000" shape-rendering="geometricPrecision"/>
<circle cx="1190" cy="441" r="4" fill="#ffd700" shape-rendering="geometricPrecision"/>
<circle cx="1292" cy="214" r="4" fill="#008000" shape-rendering="geometricPrecision"/>
<polyline shape-rendering="geometricPrecision" fill="none" stroke="#c80000" stroke-width="1" stroke-dasharray="3 1" points="46,516 104,634"/>
<polyline shape-rendering="geometricPrecision" fill="none" stroke="#006400" stroke-width="1" stroke-dasharray="3 1" points="104,634 144,501"/>
<polyline shape-rendering="geometricPrecision" fill="none" stroke="#c80000" stroke-width="1" stroke-dasharray="3 1" points="144,501 296,734"/>
<polyline shape-rendering="geometricPrecision" fill="none" stroke="#006400" stroke-width="1" stroke-dasharray="3 1" points="296,734 314,643"/>
<polyline shape-rendering="geometricPrecision" fill="none" stroke="#c80000" stroke-width="1" stroke-dasharray="3 1" points="314,643 332,744"/>
<polyline shape-rendering="geometricPrecision" fill="none" stroke="#008000" stroke-width="3.6" points="332,744 369,577 458,714"/>
<polyline shape-rendering="geometricPrecision" fill="none" stroke="#008000" stroke-width="2.8" stroke-dasharray="8 3" points="332,744 458,714"/>
<polyline shape-rendering="geometricPrecision" fill="none" stroke="#008000" stroke-width="3.5" points="440,639 444,642.7 449,648 454,654.8 462,655.8 466,656"/>
<polyline shape-rendering="geometricPrecision" fill="none" stroke="#006400" stroke-width="1" stroke-dasharray="3 1" points="458,714 518,586"/>
<polyline shape-rendering="geometricPrecision" fill="none" stroke="#c80000" stroke-width="1.5" stroke-dasharray="3 1" points="518,586 536,675"/>
<polyline shape-rendering="geometricPrecision" fill="none" stroke="#006400" stroke-width="1" stroke-dasharray="3 1" points="536,675 608,437"/>
<polyline shape-rendering="geometricPrecision" fill="none" stroke="#c80000" stroke-width="1.5" stroke-dasharray="3 1" points="608,437 656,565"/>
<polyline shape-rendering="geometricPrecision" fill="none" stroke="#006400" stroke-width="1" stroke-dasharray="3 1" points="656,565 746,324"/>
<polyline shape-rendering="geometricPrecision" fill="none" stroke="#c80000" stroke-width="1.5" stroke-dasharray="3 1" points="746,324 788,429"/>
<polyline shape-rendering="geometricPrecision" fill="none" stroke="#006400" stroke-width="1" stroke-dasharray="3 1" points="788,429 914,125"/>
<polyline shape-rendering="geometricPrecision" fill="none" stroke="#c80000" stroke-width="1.2" stroke-dasharray="3 1" points="914,125 1112,441"/>
<polyline shape-rendering="geometricPrecision" fill="none" stroke="#006400" stroke-width="1" stroke-dasharray="3 1" points="1112,441 1148,293"/>
<polyline shape-rendering="geometricPrecision" fill="none" stroke="#c80000" stroke-width="1.2" stroke-dasharray="3 1" points="1148,293 1190,441"/>
<polyline shape-rendering="geometricPrecision" fill="none" stroke="#006400" stroke-width="1" stroke-dasharray="3 1" points="1190,441 1292,214"/>
<polyline shape-rendering="geometricPrecision" fill="none" stroke="#008000" stroke-width="3" points="1173.5,355 1186,367.5"/>
<rect x="98" y="126" width="1200" height="2" fill="#ff0000"/>
<rect x="98" y="580" width="1201" height="2" fill="#00ff00"/>
<rect x="98" y="587" width="1201" height="2" fill="#00ff00"/>
<rect x="56" y="534" width="1" height="37" fill="#fff"/>
<rect x="54" y="549" width="5" height="22" fill="#ff0000"/>
<rect x="62" y="528" width="1" height="49" fill="#fff"/>
<rect x="60" y="528" width="5" height="43" fill="#ff0000"/>
<rect x="68" y="512" width="1" height="59" fill="#fff"/>
<rect x="66" y="528" width="5" height="43" fill="#ff0000"/>
<rect x="74" y="534" width="1" height="35" fill="#fff"/>
<rect x="80" y="546" width="1" height="26" fill="#fff"/>
<rect x="78" y="546" width="5" height="22" fill="#ff0000"/>
<rect x="86" y="545" width="1" height="43" fill="#fff"/>
<rect x="84" y="547" width="5" height="41" fill="#ff0000"/>
<rect x="90" y="588" width="5" height="22" fill="#ff0000"/>
<rect x="98" y="573" width="1" height="58" fill="#fff"/>
<rect x="96" y="609" width="5" height="22" fill="#ff0000"/>
<rect x="104" y="588" width="1" height="48" fill="#fff"/>
<rect x="102" y="588" width="5" height="43" fill="#ff0000"/>
<rect x="110" y="567" width="1" height="43" fill="#fff"/>
<rect x="108" y="567" width="5" height="21" fill="#ff0000"/>
<rect x="116" y="546" width="1" height="34" fill="#fff"/>
<rect x="114" y="546" width="5" height="21" fill="#ff0000"/>
<rect x="120" y="546" width="5" height="42" fill="#ff0000"/>
<rect x="128" y="546" width="1" height="55" fill="#fff"/>
<rect x="126" y="546" width="5" height="42" fill="#ff0000"/>
<rect x="134" y="525" width="1" height="43" fill="#fff"/>
<rect x="132" y="525" width="5" height="21" fill="#ff0000"/>
<rect x="138" y="504" width="5" height="34" fill="#ff0000"/>
<rect x="144" y="525" width="5" height="21" fill="#ff0000"/>
<rect x="152" y="525" width="1" height="26" fill="#fff"/>
<rect x="150" y="525" width="5" height="21" fill="#ff0000"/>
<rect x="156" y="546" width="5" height="21" fill="#ff0000"/>
<rect x="164" y="555" width="1" height="33" fill="#fff"/>
<rect x="162" y="564" width="5" height="24" fill="#ff0000"/>
<rect x="170" y="585" width="1" height="22" fill="#fff"/>
<rect x="168" y="588" width="5" height="19" fill="#ff0000"/>
<rect x="174" y="567" width="5" height="46" fill="#ff0000"/>
<rect x="180" y="546" width="5" height="21" fill="#ff0000"/>
<rect x="188" y="541" width="1" height="47" fill="#fff"/>
<rect x="186" y="546" width="5" height="42" fill="#ff0000"/>
<rect x="194" y="553" width="1" height="57" fill="#fff"/>
<rect x="192" y="588" width="5" height="22" fill="#ff0000"/>
<rect x="200" y="567" width="1" height="48" fill="#fff"/>
<rect x="198" y="567" width="5" height="43" fill="#ff0000"/>
<rect x="206" y="546" width="1" height="61" fill="#fff"/>
<rect x="204" y="546" width="5" height="21" fill="#ff0000"/>
<rect x="212" y="541" width="1" height="47" fill="#fff"/>
<rect x="210" y="546" width="5" height="42" fill="#ff0000"/>
<rect x="218" y="557" width="1" height="53" fill="#fff"/>
<rect x="216" y="588" width="5" height="22" fill="#ff0000"/>
<rect x="224" y="606" width="1" height="25" fill="#fff"/>
<rect x="222" y="610" width="5" height="21" fill="#ff0000"/>
<rect x="228" y="588" width="5" height="43" fill="#ff0000"/>
<rect x="236" y="567" width="1" height="33" fill="#fff"/>
<rect x="234" y="567" width="5" height="21" fill="#ff0000"/>
<rect x="242" y="552" width="1" height="40" fill="#fff"/>
<rect x="240" y="562" width="5" height="5" fill="#ff0000"/>
<rect x="248" y="555" width="1" height="9" fill="#fff"/>
<rect x="246" y="556" width="5" height="6" fill="#ff0000"/>
<rect x="254" y="571" width="1" height="34" fill="#fff"/>
<rect x="252" y="584" width="5" height="21" fill="#ff0000"/>
<rect x="260" y="584" width="1" height="42" fill="#fff"/>
<rect x="258" y="605" width="5" height="21" fill="#ff0000"/>
<rect x="266" y="621" width="1" height="25" fill="#fff"/>
<rect x="264" y="623" width="5" height="23" fill="#ff0000"/>
<rect x="272" y="635" width="1" height="33" fill="#fff"/>
<rect x="270" y="645" width="5" height="23" fill="#ff0000"/>
<rect x="278" y="641" width="1" height="48" fill="#fff"/>
<rect x="276" y="668" width="5" height="21" fill="#ff0000"/>
<rect x="284" y="685" width="1" height="25" fill="#fff"/>
<rect x="282" y="689" width="5" height="21" fill="#ff0000"/>
<rect x="290" y="705" width="1" height="26" fill="#fff"/>
<rect x="288" y="710" width="5" height="21" fill="#ff0000"/>
<rect x="294" y="689" width="5" height="44" fill="#ff0000"/>
<rect x="300" y="668" width="5" height="21" fill="#ff0000"/>
<rect x="308" y="646" width="1" height="50" fill="#fff"/>
<rect x="306" y="646" width="5" height="22" fill="#ff0000"/>
<rect x="312" y="643" width="5" height="46" fill="#ff0000"/>
<rect x="320" y="685" width="1" height="25" fill="#fff"/>
<rect x="318" y="688" width="5" height="22" fill="#ff0000"/>
<rect x="326" y="707" width="1" height="24" fill="#fff"/>
<rect x="324" y="710" width="5" height="21" fill="#ff0000"/>
<rect x="332" y="689" width="1" height="55" fill="#fff"/>
<rect x="330" y="689" width="5" height="42" fill="#ff0000"/>
<rect x="338" y="668" width="1" height="32" fill="#fff"/>
<rect x="336" y="668" width="5" height="21" fill="#ff0000"/>
<rect x="344" y="646" width="1" height="64" fill="#fff"/>
<rect x="342" y="646" width="5" height="22" fill="#ff0000"/>
<rect x="350" y="626" width="1" height="43" fill="#fff"/>
<rect x="348" y="626" width="5" height="20" fill="#008000"/>
<rect x="356" y="605" width="1" height="49" fill="#fff"/>
<rect x="354" y="605" width="5" height="21" fill="#008000"/>
<rect x="362" y="584" width="1" height="29" fill="#fff"/>
<rect x="360" y="584" width="5" height="26" fill="#008000"/>
<rect x="368" y="574" width="1" height="52" fill="#fff"/>
<rect x="366" y="578" width="5" height="48" fill="#008000"/>
<rect x="372" y="624" width="5" height="8" fill="#008000"/>
<rect x="380" y="595" width="1" height="50" fill="#fff"/>
<rect x="378" y="606" width="5" height="32" fill="#008000"/>
<rect x="386" y="596" width="1" height="53" fill="#fff"/>
<rect x="384" y="606" width="5" height="43" fill="#008000"/>
<rect x="392" y="606" width="1" height="55" fill="#fff"/>
<rect x="390" y="606" width="5" height="43" fill="#008000"/>
<rect x="398" y="599" width="1" height="50" fill="#fff"/>
<rect x="396" y="606" width="5" height="43" fill="#008000"/>
<rect x="404" y="606" width="1" height="50" fill="#fff"/>
<rect x="402" y="606" width="5" height="43" fill="#008000"/>
<rect x="410" y="585" width="1" height="31" fill="#fff"/>
<rect x="408" y="585" width="5" height="21" fill="#008000"/>
<rect x="416" y="580" width="1" height="48" fill="#fff"/>
<rect x="414" y="585" width="5" height="43" fill="#008000"/>
<rect x="420" y="628" width="5" height="21" fill="#008000"/>
<rect x="428" y="631" width="1" height="39" fill="#fff"/>
<rect x="426" y="649" width="5" height="21" fill="#008000"/>
<rect x="434" y="628" width="1" height="52" fill="#fff"/>
<rect x="432" y="628" width="5" height="42" fill="#008000"/>
<rect x="440" y="621" width="1" height="49" fill="#fff"/>
<rect x="438" y="628" width="5" height="42" fill="#008000"/>
<rect x="446" y="630" width="1" height="61" fill="#fff"/>
<rect x="444" y="670" width="5" height="21" fill="#008000"/>
<rect x="452" y="680" width="1" height="33" fill="#fff"/>
<rect x="450" y="691" width="5" height="22" fill="#008000"/>
<rect x="456" y="670" width="5" height="44" fill="#008000"/>
<rect x="464" y="649" width="1" height="47" fill="#fff"/>
<rect x="462" y="649" width="5" height="21" fill="#008000"/>
<rect x="470" y="631" width="1" height="57" fill="#fff"/>
<rect x="468" y="649" width="5" height="31" fill="#008000"/>
<rect x="476" y="670" width="1" height="30" fill="#fff"/>
<rect x="474" y="678" width="5" height="22" fill="#008000"/>
<rect x="482" y="656" width="1" height="55" fill="#fff"/>
<rect x="480" y="656" width="5" height="44" fill="#008000"/>
<rect x="488" y="635" width="1" height="41" fill="#fff"/>
<rect x="486" y="635" width="5" height="21" fill="#008000"/>
<rect x="494" y="614" width="1" height="39" fill="#fff"/>
<rect x="492" y="614" width="5" height="21" fill="#008000"/>
<rect x="500" y="598" width="1" height="58" fill="#fff"/>
<rect x="498" y="614" width="5" height="42" fill="#008000"/>
<rect x="506" y="614" width="1" height="46" fill="#fff"/>
<rect x="504" y="614" width="5" height="42" fill="#008000"/>
<rect x="512" y="593" width="1" height="32" fill="#fff"/>
<rect x="510" y="593" width="5" height="21" fill="#008000"/>
<rect x="518" y="585" width="1" height="50" fill="#fff"/>
<rect x="516" y="593" width="5" height="42" fill="#008000"/>
<rect x="524" y="603" width="1" height="53" fill="#fff"/>
<rect x="522" y="635" width="5" height="21" fill="#008000"/>
<rect x="530" y="638" width="1" height="26" fill="#fff"/>
<rect x="528" y="656" width="5" height="8" fill="#008000"/>
<rect x="534" y="645" width="5" height="30" fill="#008000"/>
<rect x="542" y="625" width="1" height="23" fill="#fff"/>
<rect x="540" y="625" width="5" height="21" fill="#008000"/>
<rect x="548" y="604" width="1" height="46" fill="#fff"/>
<rect x="546" y="604" width="5" height="21" fill="#008000"/>
<rect x="554" y="585" width="1" height="38" fill="#fff"/>
<rect x="552" y="590" width="5" height="14" fill="#008000"/>
<rect x="560" y="574" width="1" height="22" fill="#fff"/>
<rect x="558" y="574" width="5" height="19" fill="#008000"/>
<rect x="566" y="549" width="1" height="39" fill="#fff"/>
<rect x="564" y="549" width="5" height="21" fill="#008000"/>
<rect x="572" y="528" width="1" height="41" fill="#fff"/>
<rect x="570" y="528" width="5" height="21" fill="#008000"/>
<rect x="578" y="507" width="1" height="26" fill="#fff"/>
<rect x="576" y="507" width="5" height="21" fill="#008000"/>
<rect x="582" y="486" width="5" height="22" fill="#008000"/>
<rect x="590" y="465" width="1" height="35" fill="#fff"/>
<rect x="588" y="465" width="5" height="21" fill="#008000"/>
<rect x="596" y="451" width="1" height="18" fill="#fff"/>
<rect x="594" y="455" width="5" height="10" fill="#008000"/>
<rect x="602" y="436" width="1" height="38" fill="#fff"/>
<rect x="600" y="436" width="5" height="24" fill="#008000"/>
<rect x="606" y="436" width="5" height="44" fill="#008000"/>
<rect x="614" y="477" width="1" height="24" fill="#fff"/>
<rect x="612" y="480" width="5" height="21" fill="#008000"/>
<rect x="620" y="480" width="1" height="26" fill="#fff"/>
<rect x="618" y="491" width="5" height="10" fill="#008000"/>
<rect x="626" y="488" width="1" height="23" fill="#fff"/>
<rect x="624" y="491" width="5" height="20" fill="#008000"/>
<rect x="632" y="469" width="1" height="55" fill="#fff"/>
<rect x="630" y="469" width="5" height="42" fill="#008000"/>
<rect x="638" y="464" width="1" height="47" fill="#fff"/>
<rect x="636" y="470" width="5" height="41" fill="#008000"/>
<rect x="642" y="511" width="5" height="22" fill="#008000"/>
<rect x="650" y="513" width="1" height="41" fill="#fff"/>
<rect x="648" y="533" width="5" height="21" fill="#008000"/>
<rect x="654" y="511" width="5" height="55" fill="#008000"/>
<rect x="662" y="490" width="1" height="31" fill="#fff"/>
<rect x="660" y="490" width="5" height="21" fill="#008000"/>
<rect x="668" y="469" width="1" height="34" fill="#fff"/>
<rect x="666" y="469" width="5" height="21" fill="#008000"/>
<rect x="674" y="456" width="1" height="20" fill="#fff"/>
<rect x="672" y="470" width="5" height="4" fill="#008000"/>
<rect x="680" y="454" width="1" height="37" fill="#fff"/>
<rect x="678" y="454" width="5" height="22" fill="#008000"/>
<rect x="686" y="433" width="1" height="24" fill="#fff"/>
<rect x="684" y="433" width="5" height="22" fill="#008000"/>
<rect x="692" y="428" width="1" height="48" fill="#fff"/>
<rect x="690" y="433" width="5" height="43" fill="#008000"/>
<rect x="698" y="433" width="1" height="57" fill="#fff"/>
<rect x="696" y="433" width="5" height="43" fill="#008000"/>
<rect x="704" y="414" width="1" height="44" fill="#fff"/>
<rect x="702" y="424" width="5" height="10" fill="#008000"/>
<rect x="710" y="408" width="1" height="23" fill="#fff"/>
<rect x="708" y="408" width="5" height="22" fill="#008000"/>
<rect x="716" y="387" width="1" height="29" fill="#fff"/>
<rect x="714" y="387" width="5" height="22" fill="#008000"/>
<rect x="722" y="373" width="1" height="57" fill="#fff"/>
<rect x="720" y="387" width="5" height="43" fill="#008000"/>
<rect x="726" y="387" width="5" height="43" fill="#008000"/>
<rect x="732" y="366" width="5" height="22" fill="#008000"/>
<rect x="740" y="345" width="1" height="28" fill="#fff"/>
<rect x="738" y="345" width="5" height="21" fill="#008000"/>
<rect x="746" y="325" width="1" height="63" fill="#fff"/>
<rect x="744" y="345" width="5" height="43" fill="#008000"/>
<rect x="752" y="379" width="1" height="10" fill="#fff"/>
<rect x="750" y="385" width="5" height="4" fill="#008000"/>
<rect x="758" y="377" width="1" height="24" fill="#fff"/>
<rect x="756" y="377" width="5" height="21" fill="#008000"/>
<rect x="764" y="356" width="1" height="40" fill="#fff"/>
<rect x="762" y="356" width="5" height="37" fill="#008000"/>
<rect x="770" y="345" width="1" height="54" fill="#fff"/>
<rect x="768" y="356" width="5" height="43" fill="#008000"/>
<rect x="776" y="393" width="1" height="25" fill="#fff"/>
<rect x="774" y="393" width="5" height="22" fill="#008000"/>
<rect x="782" y="390" width="1" height="33" fill="#fff"/>
<rect x="780" y="390" width="5" height="20" fill="#008000"/>
<rect x="788" y="369" width="1" height="60" fill="#fff"/>
<rect x="786" y="369" width="5" height="21" fill="#008000"/>
<rect x="794" y="348" width="1" height="32" fill="#fff"/>
<rect x="792" y="348" width="5" height="22" fill="#008000"/>
<rect x="800" y="336" width="1" height="27" fill="#fff"/>
<rect x="798" y="343" width="5" height="6" fill="#008000"/>
<rect x="806" y="321" width="1" height="24" fill="#fff"/>
<rect x="804" y="321" width="5" height="22" fill="#008000"/>
<rect x="812" y="300" width="1" height="30" fill="#fff"/>
<rect x="810" y="300" width="5" height="21" fill="#008000"/>
<rect x="818" y="278" width="1" height="47" fill="#fff"/>
<rect x="816" y="278" width="5" height="22" fill="#008000"/>
<rect x="824" y="258" width="1" height="27" fill="#fff"/>
<rect x="822" y="261" width="5" height="18" fill="#008000"/>
<rect x="830" y="242" width="1" height="41" fill="#fff"/>
<rect x="828" y="242" width="5" height="21" fill="#008000"/>
<rect x="836" y="233" width="1" height="21" fill="#fff"/>
<rect x="834" y="242" width="5" height="1" fill="#008000"/>
<rect x="842" y="219" width="1" height="24" fill="#fff"/>
<rect x="840" y="219" width="5" height="22" fill="#008000"/>
<rect x="848" y="198" width="1" height="33" fill="#fff"/>
<rect x="846" y="198" width="5" height="21" fill="#008000"/>
<rect x="854" y="185" width="1" height="56" fill="#fff"/>
<rect x="852" y="198" width="5" height="43" fill="#008000"/>
<rect x="860" y="213" width="1" height="28" fill="#fff"/>
<rect x="858" y="216" width="5" height="25" fill="#008000"/>
<rect x="866" y="196" width="1" height="33" fill="#fff"/>
<rect x="864" y="196" width="5" height="22" fill="#008000"/>
<rect x="872" y="190" width="1" height="31" fill="#fff"/>
<rect x="870" y="196" width="5" height="4" fill="#008000"/>
<rect x="878" y="190" width="1" height="24" fill="#fff"/>
<rect x="876" y="193" width="5" height="21" fill="#008000"/>
<rect x="884" y="172" width="1" height="51" fill="#fff"/>
<rect x="882" y="172" width="5" height="42" fill="#008000"/>
<rect x="890" y="151" width="1" height="36" fill="#fff"/>
<rect x="888" y="151" width="5" height="22" fill="#008000"/>
<rect x="896" y="135" width="1" height="54" fill="#fff"/>
<rect x="894" y="151" width="5" height="38" fill="#008000"/>
<rect x="902" y="165" width="1" height="25" fill="#fff"/>
<rect x="900" y="165" width="5" height="21" fill="#008000"/>
<rect x="908" y="144" width="1" height="36" fill="#fff"/>
<rect x="906" y="144" width="5" height="22" fill="#008000"/>
<rect x="914" y="125" width="1" height="61" fill="#fff"/>
<rect x="912" y="144" width="5" height="42" fill="#008000"/>
<rect x="920" y="157" width="1" height="39" fill="#fff"/>
<rect x="918" y="175" width="5" height="11" fill="#008000"/>
<rect x="926" y="154" width="1" height="35" fill="#fff"/>
<rect x="924" y="154" width="5" height="21" fill="#008000"/>
<rect x="932" y="134" width="1" height="61" fill="#fff"/>
<rect x="930" y="154" width="5" height="41" fill="#008000"/>
<rect x="938" y="165" width="1" height="51" fill="#fff"/>
<rect x="936" y="195" width="5" height="21" fill="#008000"/>
<rect x="942" y="175" width="5" height="41" fill="#008000"/>
<rect x="950" y="165" width="1" height="41" fill="#fff"/>
<rect x="948" y="175" width="5" height="29" fill="#008000"/>
<rect x="954" y="183" width="5" height="20" fill="#008000"/>
<rect x="962" y="165" width="1" height="58" fill="#fff"/>
<rect x="960" y="183" width="5" height="40" fill="#008000"/>
<rect x="968" y="215" width="1" height="30" fill="#fff"/>
<rect x="966" y="223" width="5" height="22" fill="#008000"/>
<rect x="974" y="241" width="1" height="25" fill="#fff"/>
<rect x="972" y="245" width="5" height="21" fill="#008000"/>
<rect x="980" y="261" width="1" height="26" fill="#fff"/>
<rect x="978" y="266" width="5" height="21" fill="#008000"/>
<rect x="986" y="255" width="1" height="34" fill="#fff"/>
<rect x="984" y="266" width="5" height="22" fill="#008000"/>
<rect x="992" y="239" width="1" height="22" fill="#fff"/>
<rect x="990" y="239" width="5" height="20" fill="#008000"/>
<rect x="998" y="237" width="1" height="43" fill="#fff"/>
<rect x="996" y="241" width="5" height="39" fill="#008000"/>
<rect x="1004" y="249" width="1" height="54" fill="#fff"/>
<rect x="1002" y="280" width="5" height="23" fill="#008000"/>
<rect x="1010" y="290" width="1" height="34" fill="#fff"/>
<rect x="1008" y="303" width="5" height="21" fill="#008000"/>
<rect x="1016" y="309" width="1" height="28" fill="#fff"/>
<rect x="1014" y="315" width="5" height="8" fill="#008000"/>
<rect x="1020" y="311" width="5" height="23" fill="#008000"/>
<rect x="1028" y="328" width="1" height="27" fill="#fff"/>
<rect x="1026" y="333" width="5" height="22" fill="#008000"/>
<rect x="1034" y="350" width="1" height="26" fill="#fff"/>
<rect x="1032" y="355" width="5" height="21" fill="#008000"/>
<rect x="1040" y="333" width="1" height="46" fill="#fff"/>
<rect x="1038" y="333" width="5" height="43" fill="#008000"/>
<rect x="1046" y="326" width="1" height="50" fill="#fff"/>
<rect x="1044" y="333" width="5" height="43" fill="#008000"/>
<rect x="1052" y="365" width="1" height="31" fill="#fff"/>
<rect x="1050" y="376" width="5" height="20" fill="#008000"/>
<rect x="1058" y="356" width="1" height="50" fill="#fff"/>
<rect x="1056" y="396" width="5" height="9" fill="#008000"/>
<rect x="1064" y="380" width="1" height="23" fill="#fff"/>
<rect x="1062" y="380" width="5" height="21" fill="#008000"/>
<rect x="1070" y="358" width="1" height="26" fill="#fff"/>
<rect x="1068" y="358" width="5" height="22" fill="#008000"/>
<rect x="1076" y="346" width="1" height="55" fill="#fff"/>
<rect x="1074" y="358" width="5" height="43" fill="#008000"/>
<rect x="1082" y="375" width="1" height="47" fill="#fff"/>
<rect x="1080" y="401" width="5" height="21" fill="#008000"/>
<rect x="1088" y="380" width="1" height="45" fill="#fff"/>
<rect x="1086" y="380" width="5" height="42" fill="#008000"/>
<rect x="1094" y="369" width="1" height="22" fill="#fff"/>
<rect x="1092" y="380" width="5" height="8" fill="#008000"/>
<rect x="1098" y="383" width="5" height="22" fill="#008000"/>
<rect x="1106" y="378" width="1" height="48" fill="#fff"/>
<rect x="1104" y="405" width="5" height="21" fill="#008000"/>
<rect x="1112" y="383" width="1" height="57" fill="#fff"/>
<rect x="1110" y="383" width="5" height="43" fill="#ff0000"/>
<rect x="1118" y="362" width="1" height="43" fill="#fff"/>
<rect x="1116" y="362" width="5" height="21" fill="#ff0000"/>
<rect x="1124" y="348" width="1" height="20" fill="#fff"/>
<rect x="1122" y="351" width="5" height="11" fill="#ff0000"/>
<rect x="1130" y="333" width="1" height="41" fill="#fff"/>
<rect x="1128" y="353" width="5" height="21" fill="#ff0000"/>
<rect x="1136" y="330" width="1" height="54" fill="#fff"/>
<rect x="1134" y="330" width="5" height="44" fill="#ff0000"/>
<rect x="1142" y="309" width="1" height="25" fill="#fff"/>
<rect x="1140" y="309" width="5" height="21" fill="#ff0000"/>
<rect x="1148" y="292" width="1" height="32" fill="#fff"/>
<rect x="1146" y="296" width="5" height="13" fill="#ff0000"/>
<rect x="1152" y="296" width="5" height="22" fill="#ff0000"/>
<rect x="1160" y="315" width="1" height="24" fill="#fff"/>
<rect x="1158" y="318" width="5" height="21" fill="#ff0000"/>
<rect x="1166" y="328" width="1" height="32" fill="#fff"/>
<rect x="1164" y="339" width="5" height="21" fill="#ff0000"/>
<rect x="1172" y="355" width="1" height="26" fill="#fff"/>
<rect x="1170" y="360" width="5" height="21" fill="#ff0000"/>
<rect x="1178" y="370" width="1" height="33" fill="#fff"/>
<rect x="1176" y="381" width="5" height="22" fill="#ff0000"/>
<rect x="1184" y="390" width="1" height="34" fill="#fff"/>
<rect x="1182" y="403" width="5" height="21" fill="#ff0000"/>
<rect x="1190" y="381" width="1" height="59" fill="#fff"/>
<rect x="1188" y="381" width="5" height="43" fill="#ff0000"/>
<rect x="1196" y="378" width="1" height="9" fill="#fff"/>
<rect x="1194" y="378" width="5" height="7" fill="#ff0000"/>
<rect x="1202" y="385" width="1" height="24" fill="#fff"/>
<rect x="1200" y="388" width="5" height="21" fill="#ff0000"/>
<rect x="1208" y="366" width="1" height="58" fill="#fff"/>
<rect x="1206" y="366" width="5" height="43" fill="#ff0000"/>
<rect x="1214" y="351" width="1" height="58" fill="#fff"/>
<rect x="1212" y="366" width="5" height="43" fill="#ff0000"/>
<rect x="1220" y="380" width="1" height="45" fill="#fff"/>
<rect x="1218" y="386" width="5" height="23" fill="#ff0000"/>
<rect x="1226" y="357" width="1" height="23" fill="#fff"/>
<rect x="1224" y="357" width="5" height="21" fill="#ff0000"/>
<rect x="1230" y="335" width="5" height="21" fill="#ff0000"/>
<rect x="1238" y="314" width="1" height="23" fill="#fff"/>
<rect x="1236" y="314" width="5" height="21" fill="#ff0000"/>
<rect x="1244" y="293" width="1" height="25" fill="#fff"/>
<rect x="1242" y="293" width="5" height="22" fill="#ff0000"/>
<rect x="1250" y="271" width="1" height="33" fill="#fff"/>
<rect x="1248" y="271" width="5" height="22" fill="#008000"/>
<rect x="1256" y="257" width="1" height="57" fill="#fff"/>
<rect x="1254" y="265" width="5" height="6" fill="#008000"/>
<rect x="1260" y="245" width="5" height="21" fill="#008000"/>
<rect x="1268" y="223" width="1" height="31" fill="#fff"/>
<rect x="1266" y="223" width="5" height="22" fill="#008000"/>
<rect x="1274" y="217" width="1" height="49" fill="#fff"/>
<rect x="1272" y="223" width="5" height="43" fill="#008000"/>
<rect x="1280" y="226" width="1" height="53" fill="#fff"/>
<rect x="1278" y="249" width="5" height="17" fill="#008000"/>
<rect x="1286" y="228" width="1" height="27" fill="#fff"/>
<rect x="1284" y="228" width="5" height="22" fill="#008000"/>
<rect x="1292" y="214" width="1" height="57" fill="#fff"/>
<rect x="1290" y="228" width="5" height="43" fill="#008000"/>
<rect x="1298" y="233" width="1" height="44" fill="#fff"/>
<rect x="1296" y="248" width="5" height="23" fill="#008000"/>
<rect x="1304" y="233" width="1" height="30" fill="#fff"/>
<rect x="95" y="124" width="6" height="6" fill="#fff"/>
<rect x="695" y="124" width="6" height="6" fill="#fff"/>
<rect x="1295" y="124" width="6" height="6" fill="#fff"/>
<path shape-rendering="geometricPrecision" d="M434.5,684.5 l4.5,5.5 h-2.5 v14 h-4 v-14 h-2.5 z" fill="#008000" stroke="#fff" stroke-width="1"/>
<path shape-rendering="geometricPrecision" d="M464.5,692.5 l4.5,5.5 h-2.5 v14 h-4 v-14 h-2.5 z" fill="#008000" stroke="#fff" stroke-width="1"/>
<path shape-rendering="geometricPrecision" d="M500.5,594 l4.5,-5.5 h-2.5 v-15 h-4 v15 h-2.5 z" fill="#ff0000" stroke="#f0e0d0" stroke-width="1"/>
<rect x="54" y="801" width="295" height="20" fill="#ff0000"/>
<rect x="349" y="801" width="761" height="20" fill="#008000"/>
<rect x="1110" y="801" width="139" height="20" fill="#ff0000"/>
<rect x="1249" y="801" width="53" height="20" fill="#008000"/>
<rect x="1299" y="291" width="26" height="3" fill="#0000ff"/>
<rect x="1299" y="709" width="37" height="3" fill="#0000ff"/>
<rect x="1299" y="412" width="13" height="3" fill="#008000"/>
<text x="1315" y="132" font-family='"Liberation Sans", Arial, sans-serif' font-size="13" font-weight="bold" fill="#ff0000">L1 L</text>
<text x="1315" y="592.7" font-family='"Liberation Sans", Arial, sans-serif' font-size="13.5" fill="#00ff00" stroke="#00ff00" stroke-width="0.4">L2</text>
<text x="1315" y="585.6" font-family='"Liberation Sans", Arial, sans-serif' font-size="13.5" fill="#00ff00" stroke="#00ff00" stroke-width="0.4">L1</text>
</g>
<g clip-path="url(#plot)">
<text y="68" font-family='"Liberation Sans", Arial, sans-serif' font-size="11" fill="#fff"><tspan x="48.2" textLength="104.5" lengthAdjust="spacing">DynamicSRLines(TF</tspan><tspan x="155.7" textLength="27.6" lengthAdjust="spacing">06-11</tspan><tspan x="186.3" textLength="15.9" lengthAdjust="spacing">(30</tspan><tspan x="203.6" textLength="98.3" lengthAdjust="spacing">BetterRenko),Color</tspan><tspan x="304.9" textLength="57.9" lengthAdjust="spacing">[Red],Color</tspan><tspan x="365.8" textLength="100.9" lengthAdjust="spacing">[Lime],2,200,5,10,2),</tspan><tspan x="468.1" textLength="57.8" lengthAdjust="spacing">GomMP(TF</tspan><tspan x="528.9" textLength="27.3" lengthAdjust="spacing">06-11</tspan><tspan x="558.6" textLength="15.9" lengthAdjust="spacing">(30</tspan><tspan x="576.9" textLength="70.3" lengthAdjust="spacing">BetterRenko),</tspan><tspan x="647.2" textLength="25.5" lengthAdjust="spacing">True,</tspan><tspan x="672.7" textLength="39.1" lengthAdjust="spacing">BidAsk,</tspan><tspan x="711.8" textLength="36.3" lengthAdjust="spacing">Binary,</tspan><tspan x="748.1" textLength="61.9" lengthAdjust="spacing">OnePerDay,</tspan><tspan x="810.0" textLength="31.5" lengthAdjust="spacing">None,</tspan><tspan x="841.5" textLength="12.8" lengthAdjust="spacing">1),</tspan><tspan x="856.3" textLength="107.5" lengthAdjust="spacing">PriceActionSwing(TF</tspan><tspan x="966.8" textLength="27.3" lengthAdjust="spacing">06-11</tspan><tspan x="997.1" textLength="15.9" lengthAdjust="spacing">(30</tspan><tspan x="1013.9" textLength="71.2" lengthAdjust="spacing">BetterRenko),</tspan><tspan x="1085.1" textLength="24.1" lengthAdjust="spacing">15,3,</tspan><tspan x="1109.2" textLength="35.1" lengthAdjust="spacing">Gann),</tspan><tspan x="1147.3" textLength="90.4" lengthAdjust="spacing">PriceActionSwing</tspan><tspan x="1237.7" textLength="48.6" lengthAdjust="spacing">Trend(TF</tspan><tspan x="1289.3" textLength="27.3" lengthAdjust="spacing">06-11</tspan><tspan x="1317.7" textLength="16.5" lengthAdjust="spacing">(30</tspan><tspan x="1337.2">B</tspan></text>
</g>
<rect x="45" y="57" width="1" height="777" fill="#fff"/>
<rect x="1341" y="57" width="1" height="777" fill="#fff"/>
<rect x="45" y="833" width="1297" height="1" fill="#fff"/>
<rect x="1342" y="817" width="6" height="1" fill="#fff"/>
<text x="1349.5" y="822" font-family='"Liberation Sans", Arial, sans-serif' font-size="11" fill="#fff">760.0</text>
<rect x="1342" y="747" width="6" height="1" fill="#fff"/>
<text x="1349.5" y="752" font-family='"Liberation Sans", Arial, sans-serif' font-size="11" fill="#fff">770.0</text>
<rect x="1342" y="676" width="6" height="1" fill="#fff"/>
<text x="1349.5" y="681" font-family='"Liberation Sans", Arial, sans-serif' font-size="11" fill="#fff">780.0</text>
<rect x="1342" y="606" width="6" height="1" fill="#fff"/>
<text x="1349.5" y="611" font-family='"Liberation Sans", Arial, sans-serif' font-size="11" fill="#fff">790.0</text>
<rect x="1342" y="535" width="6" height="1" fill="#fff"/>
<text x="1349.5" y="540" font-family='"Liberation Sans", Arial, sans-serif' font-size="11" fill="#fff">800.0</text>
<rect x="1342" y="465" width="6" height="1" fill="#fff"/>
<text x="1349.5" y="470" font-family='"Liberation Sans", Arial, sans-serif' font-size="11" fill="#fff">810.0</text>
<rect x="1342" y="395" width="6" height="1" fill="#fff"/>
<text x="1349.5" y="400" font-family='"Liberation Sans", Arial, sans-serif' font-size="11" fill="#fff">820.0</text>
<rect x="1342" y="324" width="6" height="1" fill="#fff"/>
<text x="1349.5" y="329" font-family='"Liberation Sans", Arial, sans-serif' font-size="11" fill="#fff">830.0</text>
<rect x="1342" y="254" width="6" height="1" fill="#fff"/>
<text x="1349.5" y="259" font-family='"Liberation Sans", Arial, sans-serif' font-size="11" fill="#fff">840.0</text>
<rect x="1342" y="183" width="6" height="1" fill="#fff"/>
<text x="1349.5" y="188" font-family='"Liberation Sans", Arial, sans-serif' font-size="11" fill="#fff">850.0</text>
<rect x="1342" y="113" width="6" height="1" fill="#fff"/>
<text x="1349.5" y="118" font-family='"Liberation Sans", Arial, sans-serif' font-size="11" fill="#fff">860.0</text>
<path d="M1343.5,247 l6,-6 h29 v12 h-29 z" fill="#c8c8c8" stroke="#fff" stroke-width="1" shape-rendering="geometricPrecision"/>
<text x="1350.5" y="251" font-family='"Liberation Sans", Arial, sans-serif' font-size="11" fill="#000">841.0</text>
<rect x="40" y="79" width="5" height="1" fill="#fff"/>
<text x="38" y="83.5" font-family='"Liberation Sans", Arial, sans-serif' font-size="11" fill="#fff" text-anchor="end">1.1</text>
<rect x="40" y="115" width="5" height="1" fill="#fff"/>
<text x="38" y="119.5" font-family='"Liberation Sans", Arial, sans-serif' font-size="11" fill="#fff" text-anchor="end">1.1</text>
<rect x="40" y="152" width="5" height="1" fill="#fff"/>
<text x="38" y="156.5" font-family='"Liberation Sans", Arial, sans-serif' font-size="11" fill="#fff" text-anchor="end">1.09</text>
<rect x="40" y="189" width="5" height="1" fill="#fff"/>
<text x="38" y="193.5" font-family='"Liberation Sans", Arial, sans-serif' font-size="11" fill="#fff" text-anchor="end">1.09</text>
<rect x="40" y="225" width="5" height="1" fill="#fff"/>
<text x="38" y="229.5" font-family='"Liberation Sans", Arial, sans-serif' font-size="11" fill="#fff" text-anchor="end">1.08</text>
<rect x="40" y="262" width="5" height="1" fill="#fff"/>
<text x="38" y="266.5" font-family='"Liberation Sans", Arial, sans-serif' font-size="11" fill="#fff" text-anchor="end">1.08</text>
<rect x="40" y="299" width="5" height="1" fill="#fff"/>
<text x="38" y="303.5" font-family='"Liberation Sans", Arial, sans-serif' font-size="11" fill="#fff" text-anchor="end">1.07</text>
<rect x="40" y="335" width="5" height="1" fill="#fff"/>
<text x="38" y="339.5" font-family='"Liberation Sans", Arial, sans-serif' font-size="11" fill="#fff" text-anchor="end">1.07</text>
<rect x="40" y="372" width="5" height="1" fill="#fff"/>
<text x="38" y="376.5" font-family='"Liberation Sans", Arial, sans-serif' font-size="11" fill="#fff" text-anchor="end">1.06</text>
<rect x="40" y="408" width="5" height="1" fill="#fff"/>
<text x="38" y="412.5" font-family='"Liberation Sans", Arial, sans-serif' font-size="11" fill="#fff" text-anchor="end">1.06</text>
<rect x="40" y="445" width="5" height="1" fill="#fff"/>
<text x="38" y="449.5" font-family='"Liberation Sans", Arial, sans-serif' font-size="11" fill="#fff" text-anchor="end">1.05</text>
<rect x="40" y="482" width="5" height="1" fill="#fff"/>
<text x="38" y="486.5" font-family='"Liberation Sans", Arial, sans-serif' font-size="11" fill="#fff" text-anchor="end">1.05</text>
<rect x="40" y="518" width="5" height="1" fill="#fff"/>
<text x="38" y="522.5" font-family='"Liberation Sans", Arial, sans-serif' font-size="11" fill="#fff" text-anchor="end">1.04</text>
<rect x="40" y="555" width="5" height="1" fill="#fff"/>
<text x="38" y="559.5" font-family='"Liberation Sans", Arial, sans-serif' font-size="11" fill="#fff" text-anchor="end">1.04</text>
<rect x="40" y="592" width="5" height="1" fill="#fff"/>
<text x="38" y="596.5" font-family='"Liberation Sans", Arial, sans-serif' font-size="11" fill="#fff" text-anchor="end">1.03</text>
<rect x="40" y="628" width="5" height="1" fill="#fff"/>
<text x="38" y="632.5" font-family='"Liberation Sans", Arial, sans-serif' font-size="11" fill="#fff" text-anchor="end">1.03</text>
<rect x="40" y="665" width="5" height="1" fill="#fff"/>
<text x="38" y="669.5" font-family='"Liberation Sans", Arial, sans-serif' font-size="11" fill="#fff" text-anchor="end">1.02</text>
<rect x="40" y="702" width="5" height="1" fill="#fff"/>
<text x="38" y="706.5" font-family='"Liberation Sans", Arial, sans-serif' font-size="11" fill="#fff" text-anchor="end">1.02</text>
<rect x="40" y="738" width="5" height="1" fill="#fff"/>
<text x="38" y="742.5" font-family='"Liberation Sans", Arial, sans-serif' font-size="11" fill="#fff" text-anchor="end">1.01</text>
<rect x="40" y="775" width="5" height="1" fill="#fff"/>
<text x="38" y="779.5" font-family='"Liberation Sans", Arial, sans-serif' font-size="11" fill="#fff" text-anchor="end">1.01</text>
<path d="M30.5,804.5 h9 l4.5,6.5 l-4.5,6.5 h-9 z" fill="#008000" stroke="#fff" stroke-width="1" shape-rendering="geometricPrecision"/>
<text x="35.5" y="815" font-family='"Liberation Sans", Arial, sans-serif' font-size="11" fill="#fff" text-anchor="middle">1</text>
<line x1="47" y1="817.5" x2="54" y2="817.5" stroke="#d8d8d8" stroke-dasharray="1 1"/>
<text x="47" y="831" font-family='"Liberation Sans", Arial, sans-serif' font-size="11" fill="#fff">© 2011 NinjaTrader, LLC</text>
<rect x="56" y="834" width="1" height="6" fill="#fff"/>
<rect x="98" y="834" width="1" height="6" fill="#fff"/>
<text x="98.5" y="850" font-family='"Liberation Sans", Arial, sans-serif' font-size="11" fill="#fff" text-anchor="middle">3/11</text>
<rect x="158" y="834" width="1" height="6" fill="#fff"/>
<text x="158.5" y="850" font-family='"Liberation Sans", Arial, sans-serif' font-size="11" fill="#fff" text-anchor="middle">3/13</text>
<rect x="194" y="834" width="1" height="6" fill="#fff"/>
<text x="194.5" y="850" font-family='"Liberation Sans", Arial, sans-serif' font-size="11" fill="#fff" text-anchor="middle">3/14</text>
<rect x="254" y="834" width="1" height="6" fill="#fff"/>
<text x="254.5" y="850" font-family='"Liberation Sans", Arial, sans-serif' font-size="11" fill="#fff" text-anchor="middle">17:47</text>
<rect x="308" y="834" width="1" height="6" fill="#fff"/>
<text x="308.5" y="850" font-family='"Liberation Sans", Arial, sans-serif' font-size="11" fill="#fff" text-anchor="middle">3/15</text>
<rect x="368" y="834" width="1" height="6" fill="#fff"/>
<rect x="392" y="834" width="1" height="6" fill="#fff"/>
<text x="392.5" y="850" font-family='"Liberation Sans", Arial, sans-serif' font-size="11" fill="#fff" text-anchor="middle">3/16</text>
<rect x="452" y="834" width="1" height="6" fill="#fff"/>
<rect x="494" y="834" width="1" height="6" fill="#fff"/>
<text x="494.5" y="850" font-family='"Liberation Sans", Arial, sans-serif' font-size="11" fill="#fff" text-anchor="middle">3/17</text>
<rect x="548" y="834" width="1" height="6" fill="#fff"/>
<text x="548.5" y="850" font-family='"Liberation Sans", Arial, sans-serif' font-size="11" fill="#fff" text-anchor="middle">3/18</text>
<rect x="560" y="834" width="1" height="6" fill="#fff"/>
<text x="560.5" y="850" font-family='"Liberation Sans", Arial, sans-serif' font-size="11" fill="#fff" text-anchor="middle">3/20</text>
<rect x="572" y="834" width="1" height="6" fill="#fff"/>
<text x="572.5" y="850" font-family='"Liberation Sans", Arial, sans-serif' font-size="11" fill="#fff" text-anchor="middle">3/21</text>
<rect x="602" y="834" width="1" height="6" fill="#fff"/>
<text x="602.5" y="850" font-family='"Liberation Sans", Arial, sans-serif' font-size="11" fill="#fff" text-anchor="middle">3/22</text>
<rect x="632" y="834" width="1" height="6" fill="#fff"/>
<text x="632.5" y="850" font-family='"Liberation Sans", Arial, sans-serif' font-size="11" fill="#fff" text-anchor="middle">3/23</text>
<rect x="680" y="834" width="1" height="6" fill="#fff"/>
<text x="680.5" y="850" font-family='"Liberation Sans", Arial, sans-serif' font-size="11" fill="#fff" text-anchor="middle">3/24</text>
<rect x="716" y="834" width="1" height="6" fill="#fff"/>
<text x="716.5" y="850" font-family='"Liberation Sans", Arial, sans-serif' font-size="11" fill="#fff" text-anchor="middle">3/25</text>
<rect x="764" y="834" width="1" height="6" fill="#fff"/>
<text x="764.5" y="850" font-family='"Liberation Sans", Arial, sans-serif' font-size="11" fill="#fff" text-anchor="middle">3/28</text>
<rect x="788" y="834" width="1" height="6" fill="#fff"/>
<text x="788.5" y="850" font-family='"Liberation Sans", Arial, sans-serif' font-size="11" fill="#fff" text-anchor="middle">3/29</text>
<rect x="812" y="834" width="1" height="6" fill="#fff"/>
<text x="812.5" y="850" font-family='"Liberation Sans", Arial, sans-serif' font-size="11" fill="#fff" text-anchor="middle">3/30</text>
<rect x="830" y="834" width="1" height="6" fill="#fff"/>
<text x="830.5" y="850" font-family='"Liberation Sans", Arial, sans-serif' font-size="11" fill="#fff" text-anchor="middle">3/31</text>
<rect x="842" y="834" width="1" height="6" fill="#fff"/>
<text x="842.5" y="850" font-family='"Liberation Sans", Arial, sans-serif' font-size="11" fill="#fff" text-anchor="middle">4/1</text>
<rect x="866" y="834" width="1" height="6" fill="#fff"/>
<text x="866.5" y="850" font-family='"Liberation Sans", Arial, sans-serif' font-size="11" fill="#fff" text-anchor="middle">4/4</text>
<rect x="878" y="834" width="1" height="6" fill="#fff"/>
<text x="878.5" y="850" font-family='"Liberation Sans", Arial, sans-serif' font-size="11" fill="#fff" text-anchor="middle">4/5</text>
<rect x="902" y="834" width="1" height="6" fill="#fff"/>
<text x="902.5" y="850" font-family='"Liberation Sans", Arial, sans-serif' font-size="11" fill="#fff" text-anchor="middle">4/6</text>
<rect x="926" y="834" width="1" height="6" fill="#fff"/>
<text x="926.5" y="850" font-family='"Liberation Sans", Arial, sans-serif' font-size="11" fill="#fff" text-anchor="middle">4/7</text>
<rect x="956" y="834" width="1" height="6" fill="#fff"/>
<text x="956.5" y="850" font-family='"Liberation Sans", Arial, sans-serif' font-size="11" fill="#fff" text-anchor="middle">4/8</text>
<rect x="998" y="834" width="1" height="6" fill="#fff"/>
<text x="998.5" y="850" font-family='"Liberation Sans", Arial, sans-serif' font-size="11" fill="#fff" text-anchor="middle">4/11</text>
<rect x="1040" y="834" width="1" height="6" fill="#fff"/>
<text x="1040.5" y="850" font-family='"Liberation Sans", Arial, sans-serif' font-size="11" fill="#fff" text-anchor="middle">4/12</text>
<rect x="1070" y="834" width="1" height="6" fill="#fff"/>
<text x="1070.5" y="850" font-family='"Liberation Sans", Arial, sans-serif' font-size="11" fill="#fff" text-anchor="middle">4/13</text>
<rect x="1106" y="834" width="1" height="6" fill="#fff"/>
<text x="1106.5" y="850" font-family='"Liberation Sans", Arial, sans-serif' font-size="11" fill="#fff" text-anchor="middle">4/14</text>
<rect x="1130" y="834" width="1" height="6" fill="#fff"/>
<text x="1130.5" y="850" font-family='"Liberation Sans", Arial, sans-serif' font-size="11" fill="#fff" text-anchor="middle">4/15</text>
<rect x="1154" y="834" width="1" height="6" fill="#fff"/>
<text x="1154.5" y="850" font-family='"Liberation Sans", Arial, sans-serif' font-size="11" fill="#fff" text-anchor="middle">4/18</text>
<rect x="1208" y="834" width="1" height="6" fill="#fff"/>
<text x="1208.5" y="850" font-family='"Liberation Sans", Arial, sans-serif' font-size="11" fill="#fff" text-anchor="middle">4/19</text>
<rect x="1232" y="834" width="1" height="6" fill="#fff"/>
<text x="1232.5" y="850" font-family='"Liberation Sans", Arial, sans-serif' font-size="11" fill="#fff" text-anchor="middle">4/20</text>
<rect x="1268" y="834" width="1" height="6" fill="#fff"/>
<text x="1268.5" y="850" font-family='"Liberation Sans", Arial, sans-serif' font-size="11" fill="#fff" text-anchor="middle">4/21</text>
<rect x="1292" y="834" width="1" height="6" fill="#fff"/>
<text x="1292.5" y="850" font-family='"Liberation Sans", Arial, sans-serif' font-size="11" fill="#fff" text-anchor="middle">4/25</text>
</svg>

<!-- title bar -->
<div id="title" class="abs">
  <div class="blur" style="left:0;top:0;width:1388px;height:26px;background:linear-gradient(90deg,#eaf2fb 0,#e4edf9 600px,#dbe6f5 1200px,#b9d0ec 1232px,#b4cdea 1388px);"></div>
  <div class="blur" style="left:200px;top:0;width:1188px;height:17px;background:linear-gradient(#3c74be 0,#4880c8 7px,#6c98d4 10px,rgba(170,198,232,.6) 13px,rgba(220,232,247,0) 17px);"></div>
  <div class="blur" style="left:1070px;top:0;width:318px;height:17px;background:linear-gradient(90deg,rgba(160,192,230,0) 0,rgba(160,192,230,.75) 50px,rgba(168,198,234,.9) 100%);"></div>
  <div class="blur" style="left:200px;top:0;width:50px;height:17px;background:linear-gradient(90deg,#e8f0fa 0,rgba(232,240,250,.8) 30%,rgba(232,240,250,0) 100%);"></div>
  <div class="blur" style="left:602px;top:0;width:14px;height:26px;background:linear-gradient(90deg,rgba(60,100,160,0) 0,rgba(60,100,160,.75) 45%,rgba(60,100,160,.75) 60%,rgba(60,100,160,0) 100%);"></div>
  <div class="blur" style="left:1212px;top:0;width:20px;height:26px;background:linear-gradient(90deg,rgba(80,120,180,0) 0,rgba(80,120,180,.7) 45%,rgba(80,120,180,.7) 60%,rgba(80,120,180,0) 100%);"></div>
  <div class="blur" style="left:230px;top:17px;width:360px;height:7px;background:linear-gradient(90deg,rgba(190,215,240,0),rgba(175,210,235,.5) 20%,rgba(200,225,215,.5) 45%,rgba(190,215,240,.4) 80%,rgba(190,215,240,0));"></div>
  <div class="blur" style="left:640px;top:17px;width:520px;height:7px;background:linear-gradient(90deg,rgba(190,215,240,0),rgba(150,180,220,.5) 20%,rgba(170,195,225,.6) 45%,rgba(200,215,200,.5) 75%,rgba(190,215,240,0));"></div>
  <svg class="abs" style="left:3px;top:4px" width="16" height="16" viewBox="0 0 16 16"><rect x="0.5" y="1.5" width="14" height="13" fill="#fff" stroke="#6a7f9c"/><path d="M0.5 6h14M0.5 10h14M5 1.5v13M10 1.5v13" stroke="#b7c4d8" stroke-width="1"/><path d="M1 12l4-5 3 2 6-7" fill="none" stroke="#2c7a2c" stroke-width="1.6"/><path d="M1 9l4-3 3 3 6-4" fill="none" stroke="#3b64c4" stroke-width="1.2"/></svg>
  <div class="txt">TF 06-11 (30 BetterRenko)  4/25/2011</div>
  <!-- L box -->
  <div class="abs" style="left:1252px;top:0;width:31px;height:16px;box-sizing:border-box;background:#40e0d0;border:1px solid #e8f8f6;border-top:none;font-size:11px;line-height:14px;text-align:center;">L</div>
  <!-- caption buttons -->
  <div class="abs" style="left:1286px;top:-1px;width:102px;height:18px;box-sizing:border-box;border:1px solid #5f7391;border-radius:0 0 4px 4px;background:linear-gradient(#c4d6ee 0,#a9c1e2 50%,#94b0d8 50%,#a8c2e4 100%);box-shadow:inset 0 0 0 1px rgba(255,255,255,.55);"></div>
  <div class="abs" style="left:1314px;top:0;width:1px;height:16px;background:#6d83a4;"></div>
  <div class="abs" style="left:1341px;top:0;width:1px;height:16px;background:#6d83a4;"></div>
  <div class="abs" style="left:1294px;top:7px;width:11px;height:4px;box-sizing:border-box;background:#fff;border:1px solid #5a6b84;"></div>
  <div class="abs" style="left:1322px;top:3px;width:12px;height:9px;box-sizing:border-box;border:1px solid #5a6b84;background:#fff;"></div>
  <div class="abs" style="left:1325px;top:6px;width:6px;height:3px;box-sizing:border-box;border:1px solid #5a6b84;background:#a9c1e2;"></div>
  <svg class="abs" style="left:1358px;top:2px" width="14" height="11" viewBox="0 0 14 11"><path d="M1.5 1h3l2.5 2.8L9.500 1h3L8.600 5.500 12.500 10h-3L7 7.200 4.500 10h-3L5.400 5.500z" fill="#fff" stroke="#5a6b84" stroke-width="1"/></svg>
</div>
<div id="tbline" class="abs"></div>

<!-- toolbar -->
<div id="tb" class="abs">
  <svg class="abs" style="left:3px;top:3px" width="4" height="18" viewBox="0 0 4 18"><g fill="#b8b8b8"><rect x="1" y="1" width="2" height="2"/><rect x="1" y="5" width="2" height="2"/><rect x="1" y="9" width="2" height="2"/><rect x="1" y="13" width="2" height="2"/></g></svg>
  <div class="sep" style="left:12px"></div>
  <div class="t" style="left:20px">TF 06-11</div><div class="dd" style="left:71px"></div>
  <div class="t" style="left:84px">30 BetterRenko</div><div class="dd" style="left:170px"></div>
  <div class="sep" style="left:182px"></div>
  <!-- candle icon -->
  <svg class="abs" style="left:187px;top:3px" width="18" height="18" viewBox="0 0 18 18"><g stroke="#1c1c1c" stroke-width="1"><path d="M3 1v16M8 1v16M13 1v16" stroke-width="1.600"/><rect x="1.500" y="2.800" width="3" height="12.400" rx="1.500" fill="#6fdc3c"/><rect x="6.500" y="2.800" width="3" height="12.400" rx="1.500" fill="#6fdc3c"/><rect x="11.500" y="2.800" width="3" height="12.400" rx="1.500" fill="#e8463a"/></g></svg>
  <div class="dd" style="left:205px"></div>
  <!-- pencil -->
  <svg class="abs" style="left:215px;top:4px" width="18" height="18" viewBox="0 0 18 18"><path d="M2 16l1.500-4.500L12.500 2.500l3 3L6.500 14.500z" fill="#f6d02e" stroke="#8a6a12" stroke-width="1"/><path d="M2 16l1.500-4.500 3 3z" fill="#e8d6b0" stroke="#8a6a12" stroke-width=".8"/><path d="M12.500 2.500l1.200-1.200 3 3-1.200 1.200z" fill="#e2606a" stroke="#8a3a3a" stroke-width=".8"/></svg>
  <div class="dd" style="left:233px"></div>
  <!-- zoom in -->
  <svg class="abs" style="left:243px;top:3px" width="20" height="20" viewBox="0 0 20 20"><path d="M2 18l6-6" stroke="#6d6d6d" stroke-width="2.400"/><circle cx="10.500" cy="9.800" r="4.300" fill="#9cc4ec" stroke="#8a96a8" stroke-width="1.500"/><path d="M16.500 2v6.500M13.300 5.200h6.500" stroke="#12a012" stroke-width="2"/></svg>
  <!-- zoom out disabled -->
  <svg class="abs" style="left:266px;top:3px" width="20" height="20" viewBox="0 0 20 20"><path d="M2 18l6-6" stroke="#b9b9b9" stroke-width="2.400"/><circle cx="10.500" cy="9.800" r="4.300" fill="#d4d4d4" stroke="#bcbcbc" stroke-width="1.500"/><path d="M13 5h6" stroke="#c4c4c4" stroke-width="2"/></svg>
  <div class="sep" style="left:292px"></div>
  <!-- crosshair -->
  <svg class="abs" style="left:297px;top:4px" width="18" height="18" viewBox="0 0 18 18"><path d="M8 1v5.500M8 9.500v6M1 8h5.500M9.500 8h5.500" stroke="#000" stroke-width="2"/></svg>
  <div class="dd" style="left:314px"></div>
  <!-- magnifier in box -->
  <svg class="abs" style="left:327px;top:4px" width="18" height="18" viewBox="0 0 18 18"><rect x=".5" y=".5" width="14" height="14.500" fill="#fdfdfd" stroke="#8a8a8a"/><path d="M1 15l4-4" stroke="#7a7a7a" stroke-width="2.200"/><circle cx="7.500" cy="8" r="4" fill="#a4ccf0" stroke="#9aa6b8" stroke-width="1.300"/></svg>
  <div class="sep" style="left:350px"></div>
  <!-- data box -->
  <svg class="abs" style="left:355px;top:4px" width="18" height="18" viewBox="0 0 18 18"><rect x="1" y="1.500" width="7.500" height="3" rx="1.500" fill="#3fc63a" stroke="#2a7a28" stroke-width=".5"/><rect x="1" y="8.500" width="7.500" height="3" rx="1.500" fill="#e04436" stroke="#8a2a22" stroke-width=".5"/><path d="M9 3h5M9 9h3M9 15h3" stroke="#9a9a9a"/><rect x="9.500" y="3" width="2" height="14" fill="#5bcf52"/><rect x="13" y="10" width="2.500" height="7" fill="#e04436"/></svg>
  <svg class="abs" style="left:379px;top:4px" width="18" height="18" viewBox="0 0 18 18"><rect x=".5" y="1.500" width="16" height="15" fill="#e8e8e8" stroke="#8a8a8a"/><path d="M4 2v15M8.500 2v15M13 2v15" stroke="#222"/><rect x="2.500" y="5" width="3" height="8" fill="#3fb63a" stroke="#222" stroke-width=".6"/><rect x="7" y="3.500" width="3" height="8" fill="#3fc63a" stroke="#222" stroke-width=".6"/><rect x="11.500" y="6" width="3" height="8" fill="#e04436" stroke="#222" stroke-width=".6"/></svg>
  <svg class="abs" style="left:402px;top:4px" width="18" height="18" viewBox="0 0 18 18"><rect x=".5" y="1.500" width="16" height="14" fill="#e0e0e0" stroke="#9a9a9a"/><path d="M1 12h15v3H1z" fill="#c4c4c4"/><path d="M2 8l3-3 3 2 3-3 4 3" fill="none" stroke="#3aa23a" stroke-width="1.200"/><path d="M2 11l3-2 3 2 3-3 4 3" fill="none" stroke="#d65a4a" stroke-width="1.200"/></svg>
  <svg class="abs" style="left:427px;top:4px" width="14" height="18" viewBox="0 0 14 18"><path d="M.5 1.500h9l3 3v12H.5z" fill="#fff" stroke="#7a7a7a"/><text x="6.500" y="13.500" font-family="Liberation Sans,Arial,sans-serif" font-weight="bold" font-size="12" fill="#168a16" text-anchor="middle">$</text></svg>
  <svg class="abs" style="left:449px;top:4px" width="16" height="18" viewBox="0 0 16 18"><rect x=".5" y=".5" width="14" height="16" fill="#fff" stroke="#7a88a8"/><rect x="1" y="1" width="13" height="3" fill="#8aa4dc"/><rect x="2" y="5" width="3" height="10" fill="#a06ae0"/><path d="M6 6.500h7M6 9.500h7M6 12.500h7" stroke="#a9b4c8"/></svg>
  <div class="sep" style="left:471px"></div>
  <div class="t" style="left:479px">Show Statistic</div>
</div>

<!-- scrollbar -->
<div id="sb" class="abs"></div>
<div id="thumb" class="abs"></div>
<svg class="abs" style="left:984px;top:867px" width="12" height="9" viewBox="0 0 12 9"><path d="M2.500 0v8M5.500 0v8M8.500 0v8" stroke="#5a5a5a"/><path d="M3.500 1v8M6.500 1v8M9.500 1v8" stroke="#fff"/></svg>
<svg class="abs" style="left:6px;top:867px" width="6" height="9" viewBox="0 0 6 9"><path d="M5 0v9L0 4.500z" fill="#444"/></svg>
<svg class="abs" style="left:1376px;top:867px" width="6" height="9" viewBox="0 0 6 9"><path d="M1 0v9l5-4.500z" fill="#444"/></svg>
<div id="bottom" class="abs">
  <div class="abs" style="left:0;top:0;width:1388px;height:2px;background:linear-gradient(#9a9a9a,#2a2a2a);"></div>
  <div class="abs" style="left:0;top:7px;width:1388px;height:2px;background:#7c7c7c;"></div>
  <div class="abs" style="left:448px;top:2px;width:52px;height:4px;background:linear-gradient(90deg,rgba(200,70,80,0),rgba(200,70,80,.8) 30%,rgba(200,70,80,.8) 70%,rgba(150,150,160,.6));filter:blur(1px);"></div>
  <div class="abs" style="left:498px;top:2px;width:34px;height:4px;background:rgba(150,155,165,.6);filter:blur(1px);"></div>
  <div class="abs" style="left:528px;top:2px;width:18px;height:4px;background:#2f7fe0;filter:blur(1.2px);"></div>
  <div class="abs" style="left:453px;top:9px;width:39px;height:3px;background:#5d7a5f;"></div>
  <div class="abs" style="left:495px;top:9px;width:40px;height:3px;background:#77797c;"></div>
  <div class="abs" style="left:535px;top:9px;width:8px;height:3px;background:#2a74d8;"></div>
  <div class="abs" style="left:548px;top:9px;width:1px;height:3px;background:#ddd;"></div>
  <div class="abs" style="left:602px;top:2px;width:7px;height:10px;background:#a9c4e4;filter:blur(1px);"></div>
  <div class="abs" style="left:1062px;top:2px;width:70px;height:4px;background:rgba(150,158,170,.65);filter:blur(1.2px);"></div>
  <div class="abs" style="left:1128px;top:2px;width:26px;height:4px;background:#2f86ea;filter:blur(1.2px);"></div>
  <div class="abs" style="left:1064px;top:9px;width:37px;height:3px;background:#6e7073;"></div>
  <div class="abs" style="left:1103px;top:9px;width:37px;height:3px;background:#77797c;"></div>
  <div class="abs" style="left:1140px;top:9px;width:12px;height:3px;background:#2a74d8;"></div>
  <div class="abs" style="left:1158px;top:9px;width:1px;height:3px;background:#ddd;"></div>
  <div class="abs" style="left:1212px;top:2px;width:22px;height:4px;background:#b4cde8;filter:blur(1.2px);"></div>
  <div class="abs" style="left:1218px;top:9px;width:4px;height:3px;background:#c9d6e6;"></div>
  <div class="abs" style="left:1225px;top:9px;width:4px;height:3px;background:#c9d6e6;"></div>
  <div class="abs" style="left:1320px;top:9px;width:1px;height:3px;background:#999;"></div>
</div>

<!-- dialog -->
<div id="dlg" class="abs">
  <div class="abs" style="left:1px;top:1px;width:413px;height:26px;border-radius:6px 6px 0 0;background:linear-gradient(115deg,rgba(60,62,70,0) 0,rgba(60,62,70,0) 58%,rgba(70,72,80,.55) 74%,rgba(40,42,48,.35) 86%,rgba(30,30,36,.2) 100%);"></div>
  <div class="abs" style="left:2px;top:0px;width:150px;height:27px;background:radial-gradient(ellipse at center,rgba(255,255,255,.42) 0,rgba(255,255,255,.28) 40%,rgba(255,255,255,0) 72%);"></div>
  <svg class="abs" style="left:8px;top:6px" width="16" height="14" viewBox="0 0 16 14"><path d="M1 10C1 4 4 2 6 4c2 2 2 7 4 7s4-4 4-8" fill="none" stroke="#8a6a60" stroke-width="2.200"/><path d="M7 5c2 2 2 6 3.500 6S14 7 14 3" fill="none" stroke="#d42020" stroke-width="2.400"/></svg>
  <div class="abs" style="left:27px;top:6px;font-size:12px;line-height:15px;white-space:pre;color:#000;letter-spacing:-0.1px;">Line Properties</div>
  <!-- close -->
  <div class="abs" style="left:363px;top:-1px;width:48px;height:20px;box-sizing:border-box;border:1px solid #9a9a9e;border-top:none;border-radius:0 0 5px 5px;background:linear-gradient(#2c2c30 0,#17171a 50%,#050506 50%,#111114 100%);box-shadow:0 0 0 1px #2a2a2e;"></div>
  <svg class="abs" style="left:381px;top:3px" width="12" height="10" viewBox="0 0 12 10"><path d="M1 .5h3L6 3 8 .5h3L7.500 4.800 11 9.500H8L6 6.800 4 9.500H1L4.500 4.800z" fill="#fff"/></svg>
  <div class="client">
    <!-- tabs -->
    <div class="abs" style="left:1px;top:20px;width:399px;height:225px;box-sizing:border-box;border:1px solid #898c95;border-bottom-color:#fff;border-right-color:#dcdcdc;background:#f0f0f0;"></div>
    <div class="abs" style="left:2px;top:3px;width:47px;height:17px;box-sizing:border-box;border:1px solid #898c95;border-bottom:none;background:linear-gradient(#f2f2f2 0,#ebebeb 50%,#dddddd 50%,#cfcfcf 100%);font-size:11px;letter-spacing:-0.3px;line-height:17px;text-align:center;">General</div>
    <div class="abs" style="left:49px;top:0px;width:45px;height:21px;box-sizing:border-box;border:1px solid #898c95;border-bottom:none;background:#fff;font-size:11px;letter-spacing:-0.25px;line-height:18px;text-indent:6px;">Data</div>
    <div class="lbl" style="top:43px">Tag:</div>
    <div class="lbl" style="top:83px">Start Time:</div>
    <div class="lbl" style="top:123px">Start Y:</div>
    <div class="lbl" style="top:163px">End Time:</div>
    <div class="lbl" style="top:203px">End Y:</div>
    <div class="box" style="top:42px;background:#f0f0f0;color:#6d6d6d;border-radius:1px;">resLine1</div>
    <div class="box" style="top:82px;border-color:#e3e9ef;border-top-color:#abadb3;padding-left:7px;letter-spacing:0;">4/25/2011 13:14:59</div>
    <div class="box" style="top:122px;">858.00</div>
    <div class="box" style="top:162px;border-color:#e3e9ef;border-top-color:#abadb3;padding-left:7px;letter-spacing:0;">3/11/2011 02:12:00</div>
    <div class="box" style="top:202px;">858.00</div>
    <!-- calendar icons -->
    <svg class="abs" style="left:308px;top:87px" width="22" height="13" viewBox="0 0 22 13"><rect x=".5" y=".5" width="10" height="11" rx="1.500" fill="#eef0f4" stroke="#6b5d55"/><path d="M1 11.500h10M11 2v9" stroke="#8c8078" stroke-width=".8"/><g fill="#7d8db5"><rect x="2.500" y="2.500" width="1.500" height="1.500"/><rect x="5" y="2.500" width="1.500" height="1.500"/><rect x="7.500" y="2.500" width="1.500" height="1.500"/><rect x="2.500" y="5" width="1.500" height="1.500"/><rect x="5" y="5" width="1.500" height="1.500"/><rect x="7.500" y="5" width="1.500" height="1.500"/><rect x="2.500" y="7.500" width="1.500" height="1.500"/><rect x="5" y="7.500" width="1.500" height="1.500"/><rect x="7.500" y="7.500" width="1.500" height="1.500"/></g><path d="M13.500 4h7l-3.500 4z" fill="#3c4a78"/></svg>
    <svg class="abs" style="left:308px;top:167px" width="22" height="13" viewBox="0 0 22 13"><rect x=".5" y=".5" width="10" height="11" rx="1.500" fill="#eef0f4" stroke="#6b5d55"/><path d="M1 11.500h10M11 2v9" stroke="#8c8078" stroke-width=".8"/><g fill="#7d8db5"><rect x="2.500" y="2.500" width="1.500" height="1.500"/><rect x="5" y="2.500" width="1.500" height="1.500"/><rect x="7.500" y="2.500" width="1.500" height="1.500"/><rect x="2.500" y="5" width="1.500" height="1.500"/><rect x="5" y="5" width="1.500" height="1.500"/><rect x="7.500" y="5" width="1.500" height="1.500"/><rect x="2.500" y="7.500" width="1.500" height="1.500"/><rect x="5" y="7.500" width="1.500" height="1.500"/><rect x="7.500" y="7.500" width="1.500" height="1.500"/></g><path d="M13.500 4h7l-3.500 4z" fill="#3c4a78"/></svg>
    <!-- spinners -->
    <svg class="abs" style="left:320px;top:124px" width="14" height="16" viewBox="0 0 14 16"><rect x=".5" y=".5" width="13" height="7" fill="#f2f2f2" stroke="#b4b4b4"/><rect x=".5" y="8.500" width="13" height="7" fill="#e6e6e6" stroke="#b4b4b4"/><path d="M4 6h6L7 2.500z" fill="#3c4a90"/><path d="M4 10.500h6L7 14z" fill="#3c4a90"/></svg>
    <svg class="abs" style="left:320px;top:204px" width="14" height="16" viewBox="0 0 14 16"><rect x=".5" y=".5" width="13" height="7" fill="#f2f2f2" stroke="#b4b4b4"/><rect x=".5" y="8.500" width="13" height="7" fill="#e6e6e6" stroke="#b4b4b4"/><path d="M4 6h6L7 2.500z" fill="#3c4a90"/><path d="M4 10.500h6L7 14z" fill="#3c4a90"/></svg>
    <!-- buttons -->
    <div class="btn" style="left:16px;border-color:#3c7fb1;box-shadow:inset 0 0 0 1px #48d8fb;">OK</div>
    <div class="btn" style="left:112px;">Apply</div>
    <div class="btn" style="left:208px;color:#838383;border-color:#adb2b5;background:#f4f4f4;">Set Default</div>
    <div class="btn" style="left:304px;">Cancel</div>
  </div>
</div>
</body>
</html>
